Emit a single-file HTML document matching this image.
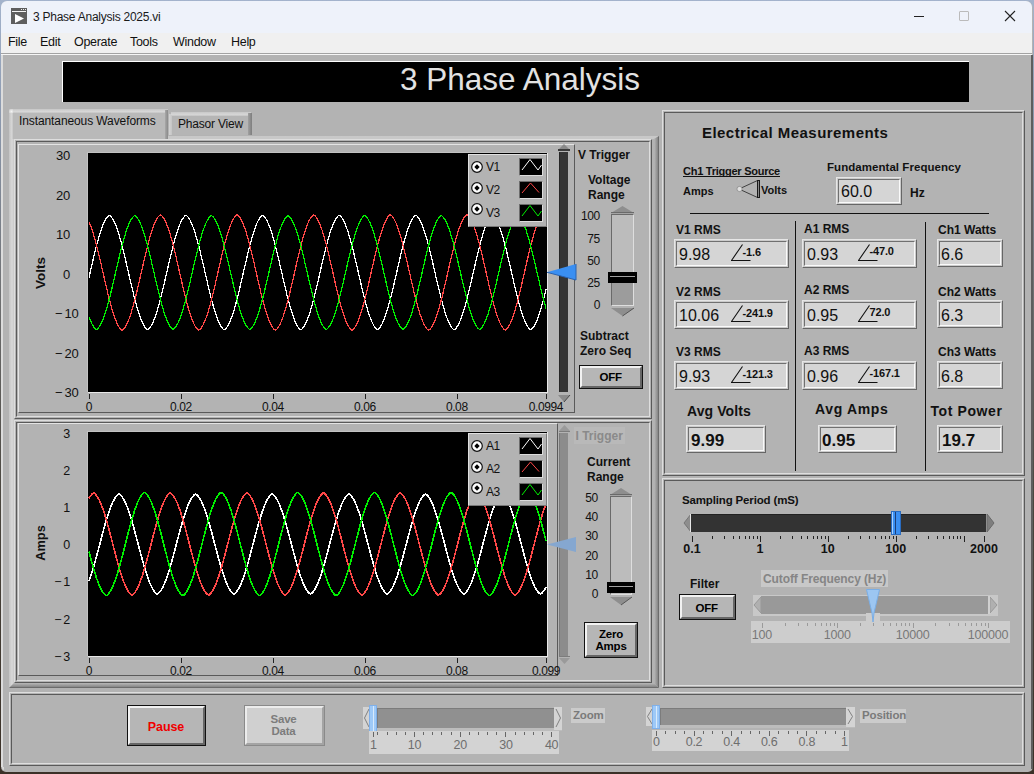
<!DOCTYPE html><html><head><meta charset="utf-8"><style>html,body{margin:0;padding:0;width:1034px;height:774px;overflow:hidden;background:#3a3226}.a{position:absolute}.t{position:absolute;white-space:nowrap;line-height:1;font-family:"Liberation Sans",sans-serif}</style></head><body><div class="a" style="left:0;top:0;width:1034px;height:774px;background:linear-gradient(to bottom,#a3b3cc 0px,#8b98ad 120px,#6e6f70 300px,#4a463e 500px,#3b3128 774px)"></div>
<div class="a" style="left:1px;top:1px;width:1032px;height:771px;border-radius:7px 7px 5px 5px;background:#b3b3b3"></div>
<div class="a" style="left:1px;top:1px;width:1031px;height:32px;background:#eef2fa;border-radius:6px 6px 0 0"></div>
<div class="a" style="left:1px;top:33px;width:1031px;height:20px;background:#f0f0f0"></div>
<div class="a" style="left:1px;top:53px;width:1031px;height:1px;background:#a3a3a3"></div>
<div class="a" style="left:1px;top:54px;width:1031px;height:1px;background:#f6f6f6"></div>
<div class="a" style="left:1px;top:55px;width:2px;height:712px;background:#dcdcdc"></div>
<div class="a" style="left:2px;top:767px;width:2px;height:3px;background:#d8d8d8;border-bottom-left-radius:3px"></div>
<div class="a" style="left:1031px;top:55px;width:2px;height:714px;background:#5e5e5e"></div>
<svg class="a" style="left:11px;top:8px" width="16" height="16" viewBox="0 0 16 16" shape-rendering="crispEdges"><rect x="0" y="0" width="16" height="16" fill="#5e5e5e"/><rect x="1" y="3" width="14" height="1" fill="#f4f4f4"/><rect x="10" y="1" width="1" height="1" fill="#eee"/><rect x="12" y="1" width="1" height="1" fill="#eee"/><rect x="14" y="1" width="1" height="1" fill="#eee"/><path d="M4 6 L13 10.5 L4 15 Z" fill="#fff" shape-rendering="auto"/></svg>
<div class="t" style="left:33px;top:11.1px;font-size:12px;font-weight:400;color:#1a1a1a;letter-spacing:-0.25px">3 Phase Analysis 2025.vi</div>
<div class="a" style="left:914px;top:16px;width:10px;height:1px;background:#222"></div>
<div class="a" style="left:959px;top:11px;width:10px;height:10px;border:1px solid #bbb;border-radius:1px;box-sizing:border-box"></div>
<svg class="a" style="left:1004px;top:10px" width="12" height="12" viewBox="0 0 12 12"><path d="M1 1 L11 11 M11 1 L1 11" stroke="#222" stroke-width="1.1"/></svg>
<div class="t" style="left:8px;top:36.4px;font-size:12.5px;font-weight:400;color:#111;letter-spacing:-0.3px">File</div>
<div class="t" style="left:40px;top:36.4px;font-size:12.5px;font-weight:400;color:#111;letter-spacing:-0.3px">Edit</div>
<div class="t" style="left:74px;top:36.4px;font-size:12.5px;font-weight:400;color:#111;letter-spacing:-0.3px">Operate</div>
<div class="t" style="left:130px;top:36.4px;font-size:12.5px;font-weight:400;color:#111;letter-spacing:-0.3px">Tools</div>
<div class="t" style="left:173px;top:36.4px;font-size:12.5px;font-weight:400;color:#111;letter-spacing:-0.3px">Window</div>
<div class="t" style="left:231px;top:36.4px;font-size:12.5px;font-weight:400;color:#111;letter-spacing:-0.3px">Help</div>
<div class="a" style="left:62px;top:61px;width:907px;height:41px;background:#000;border-top:1px solid #fff;border-left:1px solid #fff;box-sizing:border-box"></div>
<div class="t" style="left:520px;transform:translateX(-50%);top:64.3px;font-size:31.5px;font-weight:400;color:#e2e2e2;">3 Phase Analysis</div>
<div class="a" style="left:9px;top:136px;width:650px;height:552px;background:#b3b3b3"></div>
<svg class="a" style="left:9px;top:136px" width="650" height="552"><defs><linearGradient id="gl" x1="0" x2="1" y1="0" y2="0"><stop offset="0" stop-color="#c4c4c4"/><stop offset="0.6" stop-color="#d8d8d8"/><stop offset="1" stop-color="#c8c8c8"/></linearGradient><linearGradient id="gr" x1="0" x2="1" y1="0" y2="0"><stop offset="0" stop-color="#b8b8b8"/><stop offset="0.7" stop-color="#8c8c8c"/><stop offset="1" stop-color="#5c5c5c"/></linearGradient><linearGradient id="gb" x1="0" x2="0" y1="0" y2="1"><stop offset="0" stop-color="#b8b8b8"/><stop offset="0.7" stop-color="#8c8c8c"/><stop offset="1" stop-color="#5c5c5c"/></linearGradient><linearGradient id="gt" x1="0" x2="0" y1="0" y2="1"><stop offset="0" stop-color="#c8c8c8"/><stop offset="1" stop-color="#d6d6d6"/></linearGradient></defs><path d="M0 0 L650 0 L645 3 L5 3 L5 547 L0 552 Z" fill="url(#gt)"/><path d="M0 0 L5 3 L5 547 L0 552 Z" fill="url(#gl)"/><path d="M650 0 L650 552 L645 547 L645 3 Z" fill="url(#gr)"/><path d="M0 552 L650 552 L645 547 L5 547 Z" fill="url(#gb)"/></svg>
<div class="a" style="left:9px;top:109px;width:159px;height:30px;background:#b9b9b9;border-radius:3px 3px 0 0"></div>
<div class="a" style="left:9px;top:112px;width:4px;height:27px;background:linear-gradient(to right,#c2c2c2,#d6d6d6 60%,#c6c6c6)"></div>
<div class="a" style="left:12px;top:109px;width:156px;height:4px;background:linear-gradient(to bottom,#c6c6c6,#d8d8d8 60%,#c4c4c4)"></div>
<div class="a" style="left:9px;top:109px;width:4px;height:4px;background:radial-gradient(circle at 2.5px 2.5px,#f4f4f4 0,#d8d8d8 2px,rgba(179,179,179,0) 3.5px)"></div>
<div class="a" style="left:165px;top:110px;width:3px;height:29px;background:linear-gradient(to right,#a8a8a8,#8a8a8a)"></div>
<div class="a" style="left:169px;top:112px;width:83px;height:23px;background:#b5b5b5;border-radius:3px 3px 0 0"></div>
<div class="a" style="left:169px;top:114px;width:3px;height:21px;background:linear-gradient(to right,#d4d4d4,#c4c4c4)"></div>
<div class="a" style="left:171px;top:112px;width:80px;height:4px;background:linear-gradient(to bottom,#c8c8c8,#d6d6d6 60%,#c4c4c4)"></div>
<div class="a" style="left:248px;top:113px;width:4px;height:22px;background:linear-gradient(to right,#a0a0a0,#7e7e7e)"></div>
<div class="t" style="left:19px;top:114.8px;font-size:12px;font-weight:400;color:#111;letter-spacing:-0.1px">Instantaneous Waveforms</div>
<div class="t" style="left:178px;top:117.8px;font-size:12px;font-weight:400;color:#111;letter-spacing:-0.2px">Phasor View</div>
<div class="a" style="left:14px;top:139px;width:638px;height:280px;border-top:1px solid #dedede;border-left:1px solid #dedede;border-right:1px solid #5a5a5a;border-bottom:1px solid #5a5a5a;box-sizing:border-box"></div>
<div class="a" style="left:16px;top:141px;width:634px;height:276px;border-top:1px solid #5a5a5a;border-left:1px solid #5a5a5a;border-right:1px solid #dedede;border-bottom:1px solid #dedede;box-sizing:border-box"></div>
<div class="a" style="left:18px;top:144px;width:557px;height:269px;border-top:1px solid #e4e4e4;border-left:1px solid #e4e4e4;border-right:1px solid #5a5a5a;border-bottom:1px solid #5a5a5a;box-sizing:border-box"></div>
<div class="a" style="left:88px;top:153px;width:459px;height:239px;background:#000;border-right:1px solid #e8e8e8;border-bottom:1px solid #e8e8e8;box-shadow:-1px -1px 0 0 #c2c2c2"></div>
<svg class="a" style="left:0;top:0" width="1034" height="774"><defs><clipPath id="c139"><rect x="88" y="153" width="459" height="239"/></clipPath></defs><g clip-path="url(#c139)" fill="none" stroke-width="1.25" shape-rendering="crispEdges"><polyline stroke="#ffffff" points="89,277.5 90,273.1 91,268.8 92,264.4 93,260.1 94,255.9 95,251.8 96,247.8 97,243.9 98,240.2 99,236.7 100,233.4 101,230.3 102,227.5 103,224.9 104,222.6 105,220.5 106,218.8 107,217.3 108,216.2 109,215.3 110,215.7 111,216.6 112,217.9 113,219.5 114,221.3 115,223.5 116,225.9 117,228.6 118,231.6 119,234.7 120,238.1 121,241.7 122,245.5 123,249.4 124,253.4 125,257.6 126,261.9 127,266.2 128,270.5 129,274.9 130,279.2 131,283.5 132,287.8 133,291.9 134,296.0 135,299.9 136,303.6 137,307.2 138,310.6 139,313.7 140,316.6 141,319.3 142,321.7 143,323.8 144,325.7 145,327.2 146,328.5 147,329.4 148,329.6 149,328.7 150,327.5 151,326.1 152,324.3 153,322.2 154,319.9 155,317.3 156,314.4 157,311.3 158,308.0 159,304.4 160,300.7 161,296.8 162,292.8 163,288.7 164,284.5 165,280.2 166,275.8 167,271.5 168,267.1 169,262.8 170,258.5 171,254.4 172,250.3 173,246.3 174,242.5 175,238.9 176,235.5 177,232.2 178,229.2 179,226.5 180,224.0 181,221.8 182,219.9 183,218.2 184,216.9 185,215.8 186,215.2 187,216.0 188,217.1 189,218.4 190,220.1 191,222.1 192,224.4 193,226.9 194,229.7 195,232.7 196,236.0 197,239.4 198,243.1 199,246.9 200,250.9 201,255.0 202,259.2 203,263.5 204,267.8 205,272.2 206,276.5 207,280.8 208,285.1 209,289.3 210,293.5 211,297.4 212,301.3 213,305.0 214,308.5 215,311.8 216,314.8 217,317.7 218,320.2 219,322.5 220,324.6 221,326.3 222,327.7 223,328.9 224,329.7 225,329.3 226,328.3 227,327.0 228,325.4 229,323.5 230,321.4 231,318.9 232,316.2 233,313.3 234,310.1 235,306.7 236,303.1 237,299.3 238,295.4 239,291.3 240,287.1 241,282.9 242,278.6 243,274.2 244,269.9 245,265.5 246,261.2 247,257.0 248,252.8 249,248.8 250,244.9 251,241.2 252,237.6 253,234.2 254,231.1 255,228.2 256,225.5 257,223.1 258,221.0 259,219.2 260,217.7 261,216.5 262,215.5 263,215.5 264,216.3 265,217.5 266,219.0 267,220.8 268,222.9 269,225.3 270,227.9 271,230.8 272,233.9 273,237.2 274,240.8 275,244.5 276,248.4 277,252.4 278,256.6 279,260.8 280,265.1 281,269.4 282,273.8 283,278.1 284,282.4 285,286.7 286,290.9 287,295.0 288,298.9 289,302.7 290,306.3 291,309.7 292,312.9 293,315.9 294,318.7 295,321.1 296,323.3 297,325.2 298,326.9 299,328.2 300,329.2 301,329.8 302,329.0 303,327.9 304,326.5 305,324.8 306,322.8 307,320.5 308,317.9 309,315.1 310,312.1 311,308.8 312,305.3 313,301.7 314,297.8 315,293.9 316,289.8 317,285.6 318,281.3 319,276.9 320,272.6 321,268.2 322,263.9 323,259.6 324,255.4 325,251.3 326,247.3 327,243.5 328,239.8 329,236.3 330,233.0 331,230.0 332,227.2 333,224.6 334,222.3 335,220.3 336,218.6 337,217.2 338,216.1 339,215.3 340,215.8 341,216.8 342,218.1 343,219.7 344,221.6 345,223.8 346,226.2 347,229.0 348,231.9 349,235.1 350,238.5 351,242.2 352,245.9 353,249.9 354,253.9 355,258.1 356,262.4 357,266.7 358,271.0 359,275.4 360,279.7 361,284.0 362,288.3 363,292.4 364,296.5 365,300.3 366,304.1 367,307.6 368,311.0 369,314.1 370,317.0 371,319.6 372,322.0 373,324.1 374,325.9 375,327.4 376,328.6 377,329.5 378,329.5 379,328.6 380,327.4 381,325.9 382,324.0 383,321.9 384,319.6 385,316.9 386,314.0 387,310.9 388,307.5 389,304.0 390,300.3 391,296.4 392,292.3 393,288.2 394,284.0 395,279.7 396,275.3 397,271.0 398,266.6 399,262.3 400,258.0 401,253.9 402,249.8 403,245.9 404,242.1 405,238.5 406,235.1 407,231.9 408,228.9 409,226.2 410,223.7 411,221.5 412,219.6 413,218.0 414,216.7 415,215.7 416,215.3 417,216.1 418,217.2 419,218.6 420,220.4 421,222.4 422,224.7 423,227.2 424,230.0 425,233.1 426,236.4 427,239.9 428,243.6 429,247.4 430,251.4 431,255.5 432,259.7 433,264.0 434,268.3 435,272.7 436,277.0 437,281.4 438,285.6 439,289.8 440,293.9 441,297.9 442,301.8 443,305.4 444,308.9 445,312.2 446,315.2 447,318.0 448,320.5 449,322.8 450,324.8 451,326.5 452,327.9 453,329.0 454,329.8 455,329.2 456,328.2 457,326.8 458,325.2 459,323.3 460,321.1 461,318.6 462,315.9 463,312.9 464,309.7 465,306.2 466,302.6 467,298.8 468,294.9 469,290.8 470,286.6 471,282.4 472,278.0 473,273.7 474,269.3 475,265.0 476,260.7 477,256.5 478,252.3 479,248.3 480,244.4 481,240.7 482,237.2 483,233.8 484,230.7 485,227.9 486,225.2 487,222.9 488,220.8 489,219.0 490,217.5 491,216.3 492,215.4 493,215.5 494,216.5 495,217.7 496,219.2 497,221.1 498,223.2 499,225.6 500,228.2 501,231.2 502,234.3 503,237.7 504,241.2 505,245.0 506,248.9 507,252.9 508,257.1 509,261.3 510,265.6 511,269.9 512,274.3 513,278.7 514,283.0 515,287.2 516,291.4 517,295.4 518,299.4 519,303.1 520,306.7 521,310.1 522,313.3 523,316.3 524,319.0 525,321.4 526,323.6 527,325.5 528,327.0 529,328.3 530,329.3 531,329.7 532,328.8 533,327.7 534,326.3 535,324.5 536,322.5 537,320.2 538,317.6 539,314.8 540,311.7 541,308.4 542,304.9 543,301.2 544,297.4 545,293.4 546,289.3"/><polyline stroke="#ff4848" points="89,221.9 90,224.2 91,226.8 92,229.7 93,232.7 94,236.0 95,239.6 96,243.3 97,247.1 98,251.2 99,255.3 100,259.5 101,263.8 102,268.2 103,272.6 104,277.0 105,281.4 106,285.7 107,289.9 108,294.0 109,298.1 110,301.9 111,305.6 112,309.1 113,312.4 114,315.5 115,318.3 116,320.9 117,323.2 118,325.2 119,326.9 120,328.3 121,329.4 122,330.2 123,329.7 124,328.6 125,327.3 126,325.7 127,323.7 128,321.5 129,319.0 130,316.3 131,313.3 132,310.0 133,306.6 134,302.9 135,299.1 136,295.1 137,291.0 138,286.8 139,282.5 140,278.2 141,273.8 142,269.4 143,265.0 144,260.7 145,256.4 146,252.2 147,248.2 148,244.3 149,240.5 150,236.9 151,233.6 152,230.4 153,227.5 154,224.9 155,222.5 156,220.4 157,218.6 158,217.1 159,215.9 160,215.0 161,215.1 162,216.0 163,217.2 164,218.8 165,220.6 166,222.8 167,225.2 168,227.8 169,230.8 170,233.9 171,237.3 172,240.9 173,244.7 174,248.6 175,252.7 176,256.9 177,261.1 178,265.5 179,269.9 180,274.2 181,278.6 182,283.0 183,287.3 184,291.5 185,295.6 186,299.5 187,303.3 188,307.0 189,310.4 190,313.6 191,316.6 192,319.3 193,321.8 194,324.0 195,325.9 196,327.5 197,328.8 198,329.8 199,330.1 200,329.3 201,328.2 202,326.7 203,325.0 204,322.9 205,320.6 206,318.0 207,315.2 208,312.1 209,308.8 210,305.2 211,301.5 212,297.6 213,293.6 214,289.5 215,285.2 216,280.9 217,276.5 218,272.1 219,267.7 220,263.4 221,259.1 222,254.8 223,250.7 224,246.7 225,242.8 226,239.2 227,235.7 228,232.4 229,229.3 230,226.5 231,224.0 232,221.7 233,219.7 234,218.0 235,216.6 236,215.5 237,214.7 238,215.4 239,216.4 240,217.8 241,219.4 242,221.4 243,223.6 244,226.1 245,228.9 246,231.9 247,235.2 248,238.6 249,242.3 250,246.1 251,250.1 252,254.2 253,258.5 254,262.8 255,267.1 256,271.5 257,275.9 258,280.3 259,284.6 260,288.9 261,293.0 262,297.1 263,301.0 264,304.7 265,308.3 266,311.6 267,314.7 268,317.6 269,320.3 270,322.6 271,324.7 272,326.5 273,328.0 274,329.2 275,330.0 276,329.9 277,328.9 278,327.7 279,326.1 280,324.2 281,322.1 282,319.7 283,317.0 284,314.0 285,310.9 286,307.5 287,303.9 288,300.1 289,296.1 290,292.1 291,287.9 292,283.6 293,279.3 294,274.9 295,270.5 296,266.1 297,261.8 298,257.5 299,253.3 300,249.2 301,245.2 302,241.4 303,237.8 304,234.4 305,231.2 306,228.3 307,225.5 308,223.1 309,220.9 310,219.0 311,217.5 312,216.2 313,215.2 314,214.9 315,215.7 316,216.9 317,218.4 318,220.1 319,222.2 320,224.5 321,227.1 322,230.0 323,233.1 324,236.5 325,240.0 326,243.7 327,247.6 328,251.6 329,255.8 330,260.1 331,264.4 332,268.7 333,273.1 334,277.5 335,281.9 336,286.2 337,290.4 338,294.5 339,298.5 340,302.4 341,306.1 342,309.5 343,312.8 344,315.8 345,318.6 346,321.2 347,323.4 348,325.4 349,327.1 350,328.5 351,329.5 352,330.3 353,329.6 354,328.5 355,327.1 356,325.4 357,323.5 358,321.2 359,318.7 360,315.9 361,312.9 362,309.6 363,306.1 364,302.5 365,298.6 366,294.6 367,290.5 368,286.3 369,282.0 370,277.6 371,273.2 372,268.8 373,264.5 374,260.1 375,255.9 376,251.7 377,247.7 378,243.8 379,240.1 380,236.5 381,233.2 382,230.1 383,227.2 384,224.6 385,222.2 386,220.2 387,218.4 388,216.9 389,215.8 390,214.9 391,215.2 392,216.1 393,217.4 394,219.0 395,220.9 396,223.0 397,225.5 398,228.2 399,231.1 400,234.3 401,237.8 402,241.4 403,245.2 404,249.1 405,253.2 406,257.4 407,261.7 408,266.0 409,270.4 410,274.8 411,279.2 412,283.5 413,287.8 414,292.0 415,296.0 416,300.0 417,303.8 418,307.4 419,310.8 420,314.0 421,316.9 422,319.6 423,322.0 424,324.2 425,326.1 426,327.6 427,328.9 428,329.9 429,330.1 430,329.2 431,328.0 432,326.5 433,324.7 434,322.7 435,320.3 436,317.7 437,314.8 438,311.7 439,308.3 440,304.8 441,301.1 442,297.2 443,293.1 444,288.9 445,284.7 446,280.4 447,276.0 448,271.6 449,267.2 450,262.9 451,258.5 452,254.3 453,250.2 454,246.2 455,242.4 456,238.7 457,235.3 458,232.0 459,229.0 460,226.2 461,223.7 462,221.4 463,219.5 464,217.8 465,216.5 466,215.4 467,214.7 468,215.5 469,216.6 470,218.0 471,219.7 472,221.7 473,223.9 474,226.5 475,229.3 476,232.3 477,235.6 478,239.1 479,242.8 480,246.6 481,250.6 482,254.7 483,259.0 484,263.3 485,267.6 486,272.0 487,276.4 488,280.8 489,285.1 490,289.4 491,293.5 492,297.5 493,301.4 494,305.1 495,308.7 496,312.0 497,315.1 498,318.0 499,320.6 500,322.9 501,324.9 502,326.7 503,328.1 504,329.3 505,330.1 506,329.8 507,328.8 508,327.5 509,325.9 510,324.0 511,321.8 512,319.4 513,316.6 514,313.7 515,310.5 516,307.0 517,303.4 518,299.6 519,295.7 520,291.6 521,287.4 522,283.1 523,278.7 524,274.3 525,270.0 526,265.6 527,261.2 528,257.0 529,252.8 530,248.7 531,244.8 532,241.0 533,237.4 534,234.0 535,230.8 536,227.9 537,225.2 538,222.8 539,220.7 540,218.8 541,217.3 542,216.0 543,215.1 544,215.0 545,215.9 546,217.1"/><polyline stroke="#00f000" points="89,316.8 90,319.4 91,321.8 92,323.9 93,325.7 94,327.2 95,328.4 96,329.2 97,329.2 98,328.3 99,327.1 100,325.5 101,323.7 102,321.6 103,319.3 104,316.6 105,313.7 106,310.6 107,307.3 108,303.7 109,300.0 110,296.1 111,292.1 112,288.0 113,283.8 114,279.5 115,275.2 116,270.8 117,266.5 118,262.2 119,258.0 120,253.8 121,249.8 122,245.9 123,242.1 124,238.5 125,235.2 126,232.0 127,229.0 128,226.3 129,223.9 130,221.7 131,219.9 132,218.3 133,217.0 134,216.0 135,215.6 136,216.4 137,217.5 138,219.0 139,220.7 140,222.7 141,225.0 142,227.5 143,230.3 144,233.4 145,236.7 146,240.1 147,243.8 148,247.6 149,251.6 150,255.7 151,259.9 152,264.1 153,268.5 154,272.8 155,277.1 156,281.4 157,285.7 158,289.9 159,293.9 160,297.9 161,301.7 162,305.3 163,308.8 164,312.0 165,315.1 166,317.8 167,320.4 168,322.6 169,324.6 170,326.3 171,327.6 172,328.7 173,329.5 174,328.9 175,327.9 176,326.5 177,324.9 178,323.0 179,320.8 180,318.3 181,315.6 182,312.6 183,309.4 184,306.0 185,302.4 186,298.6 187,294.7 188,290.6 189,286.4 190,282.2 191,277.9 192,273.6 193,269.2 194,264.9 195,260.6 196,256.4 197,252.3 198,248.3 199,244.5 200,240.8 201,237.3 202,233.9 203,230.9 204,228.0 205,225.4 206,223.1 207,221.0 208,219.2 209,217.8 210,216.6 211,215.7 212,215.9 213,216.8 214,218.0 215,219.6 216,221.4 217,223.5 218,225.9 219,228.5 220,231.4 221,234.6 222,237.9 223,241.5 224,245.2 225,249.1 226,253.1 227,257.2 228,261.5 229,265.8 230,270.1 231,274.4 232,278.7 233,283.0 234,287.3 235,291.4 236,295.4 237,299.3 238,303.1 239,306.7 240,310.0 241,313.2 242,316.1 243,318.8 244,321.2 245,323.4 246,325.2 247,326.8 248,328.1 249,329.1 250,329.4 251,328.5 252,327.4 253,326.0 254,324.2 255,322.2 256,319.9 257,317.3 258,314.5 259,311.4 260,308.1 261,304.6 262,301.0 263,297.1 264,293.2 265,289.1 266,284.9 267,280.6 268,276.3 269,271.9 270,267.6 271,263.3 272,259.1 273,254.9 274,250.8 275,246.9 276,243.1 277,239.4 278,236.0 279,232.8 280,229.8 281,227.0 282,224.5 283,222.3 284,220.3 285,218.6 286,217.3 287,216.2 288,215.5 289,216.2 290,217.2 291,218.6 292,220.2 293,222.1 294,224.4 295,226.9 296,229.6 297,232.6 298,235.8 299,239.2 300,242.9 301,246.6 302,250.6 303,254.6 304,258.8 305,263.1 306,267.4 307,271.7 308,276.0 309,280.3 310,284.6 311,288.8 312,292.9 313,296.9 314,300.8 315,304.4 316,307.9 317,311.2 318,314.3 319,317.2 320,319.7 321,322.1 322,324.1 323,325.9 324,327.3 325,328.5 326,329.3 327,329.1 328,328.1 329,326.9 330,325.3 331,323.5 332,321.4 333,319.0 334,316.3 335,313.4 336,310.2 337,306.9 338,303.3 339,299.6 340,295.7 341,291.6 342,287.5 343,283.3 344,279.0 345,274.7 346,270.3 347,266.0 348,261.7 349,257.5 350,253.3 351,249.3 352,245.4 353,241.7 354,238.1 355,234.8 356,231.6 357,228.7 358,226.0 359,223.6 360,221.5 361,219.7 362,218.1 363,216.8 364,215.9 365,215.7 366,216.5 367,217.7 368,219.1 369,220.9 370,222.9 371,225.3 372,227.9 373,230.7 374,233.8 375,237.1 376,240.6 377,244.3 378,248.1 379,252.1 380,256.2 381,260.4 382,264.7 383,269.0 384,273.3 385,277.6 386,282.0 387,286.2 388,290.4 389,294.4 390,298.4 391,302.2 392,305.8 393,309.2 394,312.4 395,315.4 396,318.2 397,320.6 398,322.9 399,324.8 400,326.4 401,327.8 402,328.8 403,329.5 404,328.8 405,327.7 406,326.3 407,324.7 408,322.7 409,320.5 410,318.0 411,315.2 412,312.2 413,309.0 414,305.5 415,301.9 416,298.1 417,294.2 418,290.1 419,285.9 420,281.7 421,277.4 422,273.0 423,268.7 424,264.4 425,260.1 426,255.9 427,251.8 428,247.9 429,244.0 430,240.3 431,236.8 432,233.6 433,230.5 434,227.7 435,225.1 436,222.8 437,220.8 438,219.0 439,217.6 440,216.5 441,215.6 442,216.0 443,216.9 444,218.2 445,219.8 446,221.6 447,223.8 448,226.2 449,228.9 450,231.8 451,235.0 452,238.4 453,241.9 454,245.7 455,249.6 456,253.6 457,257.8 458,262.0 459,266.3 460,270.6 461,274.9 462,279.3 463,283.5 464,287.8 465,291.9 466,295.9 467,299.8 468,303.5 469,307.1 470,310.4 471,313.6 472,316.5 473,319.1 474,321.5 475,323.6 476,325.4 477,327.0 478,328.2 479,329.1 480,329.3 481,328.4 482,327.2 483,325.8 484,324.0 485,321.9 486,319.6 487,317.0 488,314.1 489,311.0 490,307.7 491,304.2 492,300.5 493,296.7 494,292.7 495,288.6 496,284.3 497,280.1 498,275.8 499,271.4 500,267.1 501,262.8 502,258.5 503,254.4 504,250.3 505,246.4 506,242.6 507,239.0 508,235.6 509,232.4 510,229.4 511,226.7 512,224.2 513,222.0 514,220.1 515,218.5 516,217.1 517,216.1 518,215.5 519,216.3 520,217.4 521,218.7 522,220.4 523,222.4 524,224.7 525,227.2 526,229.9 527,233.0 528,236.2 529,239.7 530,243.3 531,247.1 532,251.1 533,255.1 534,259.3 535,263.6 536,267.9 537,272.2 538,276.6 539,280.9 540,285.1 541,289.3 542,293.4 543,297.4 544,301.2 545,304.9 546,308.4"/></g></svg>
<div class="t" style="right:964px;top:149.3px;font-size:13px;font-weight:400;color:#111;letter-spacing:-0.2px">30</div>
<div class="t" style="right:964px;top:188.7px;font-size:13px;font-weight:400;color:#111;letter-spacing:-0.2px">20</div>
<div class="t" style="right:964px;top:228.2px;font-size:13px;font-weight:400;color:#111;letter-spacing:-0.2px">10</div>
<div class="t" style="right:964px;top:267.6px;font-size:13px;font-weight:400;color:#111;letter-spacing:-0.2px">0</div>
<div class="t" style="right:955.5px;top:307.1px;font-size:13px;font-weight:400;color:#111;letter-spacing:-0.2px"><span style="margin-right:2px">−</span>10</div>
<div class="t" style="right:955.5px;top:346.5px;font-size:13px;font-weight:400;color:#111;letter-spacing:-0.2px"><span style="margin-right:2px">−</span>20</div>
<div class="t" style="right:955.5px;top:386.0px;font-size:13px;font-weight:400;color:#111;letter-spacing:-0.2px"><span style="margin-right:2px">−</span>30</div>
<div class="t" style="left:40.5px;top:273.0px;font-size:13.5px;font-weight:700;color:#111;transform:translate(-50%,-50%) rotate(-90deg)">Volts</div>
<div class="a" style="left:89px;top:394px;width:1px;height:5px;background:#222"></div>
<div class="t" style="left:89px;transform:translateX(-50%);top:400.8px;font-size:12px;font-weight:400;color:#111;letter-spacing:-0.4px">0</div>
<div class="a" style="left:181px;top:394px;width:1px;height:5px;background:#222"></div>
<div class="t" style="left:180.95171026156942px;transform:translateX(-50%);top:400.8px;font-size:12px;font-weight:400;color:#111;letter-spacing:-0.4px">0.02</div>
<div class="a" style="left:273px;top:394px;width:1px;height:5px;background:#222"></div>
<div class="t" style="left:272.90342052313883px;transform:translateX(-50%);top:400.8px;font-size:12px;font-weight:400;color:#111;letter-spacing:-0.4px">0.04</div>
<div class="a" style="left:365px;top:394px;width:1px;height:5px;background:#222"></div>
<div class="t" style="left:364.85513078470825px;transform:translateX(-50%);top:400.8px;font-size:12px;font-weight:400;color:#111;letter-spacing:-0.4px">0.06</div>
<div class="a" style="left:457px;top:394px;width:1px;height:5px;background:#222"></div>
<div class="t" style="left:456.80684104627767px;transform:translateX(-50%);top:400.8px;font-size:12px;font-weight:400;color:#111;letter-spacing:-0.4px">0.08</div>
<div class="a" style="left:546px;top:394px;width:1px;height:5px;background:#222"></div>
<div class="t" style="left:546px;transform:translateX(-50%);top:400.8px;font-size:12px;font-weight:400;color:#111;letter-spacing:-0.4px">0.0994</div>
<div class="a" style="left:468px;top:154px;width:79px;height:73px;background:#b3b3b3;border-top:1px solid #e0e0e0;border-left:1px solid #e0e0e0;border-right:1px solid #777;border-bottom:1px solid #777;box-sizing:border-box"></div>
<svg class="a" style="left:470px;top:159.5px" width="14" height="14"><circle cx="7" cy="7" r="5.3" fill="#fff" stroke="#111" stroke-width="1.2"/><path d="M7 4.3 L9.7 7 L7 9.7 L4.3 7 Z" fill="#000"/></svg>
<div class="t" style="left:486px;top:160.8px;font-size:12px;font-weight:400;color:#111;letter-spacing:-0.6px">V1</div>
<div class="a" style="left:519px;top:158px;width:24px;height:18px;background:#000;border-top:1px solid #6c6c6c;border-left:1px solid #6c6c6c;border-right:1px solid #dcdcdc;border-bottom:1px solid #dcdcdc;box-sizing:border-box"></div>
<svg class="a" style="left:519px;top:158px" width="24" height="18"><polyline points="3,12 11,1.5 19,12 22.5,7" fill="none" stroke="#ffffff" stroke-width="1"/></svg>
<svg class="a" style="left:470px;top:180.5px" width="14" height="14"><circle cx="7" cy="7" r="5.3" fill="#fff" stroke="#111" stroke-width="1.2"/><path d="M7 4.3 L9.7 7 L7 9.7 L4.3 7 Z" fill="#000"/></svg>
<div class="t" style="left:486px;top:183.8px;font-size:12px;font-weight:400;color:#111;letter-spacing:-0.6px">V2</div>
<div class="a" style="left:519px;top:181px;width:24px;height:18px;background:#000;border-top:1px solid #6c6c6c;border-left:1px solid #6c6c6c;border-right:1px solid #dcdcdc;border-bottom:1px solid #dcdcdc;box-sizing:border-box"></div>
<svg class="a" style="left:519px;top:181px" width="24" height="18"><polyline points="3,12 11.5,2 20,11.5" fill="none" stroke="#ff4848" stroke-width="1"/></svg>
<svg class="a" style="left:470px;top:201.5px" width="14" height="14"><circle cx="7" cy="7" r="5.3" fill="#fff" stroke="#111" stroke-width="1.2"/><path d="M7 4.3 L9.7 7 L7 9.7 L4.3 7 Z" fill="#000"/></svg>
<div class="t" style="left:486px;top:206.8px;font-size:12px;font-weight:400;color:#111;letter-spacing:-0.6px">V3</div>
<div class="a" style="left:519px;top:204px;width:24px;height:18px;background:#000;border-top:1px solid #6c6c6c;border-left:1px solid #6c6c6c;border-right:1px solid #dcdcdc;border-bottom:1px solid #dcdcdc;box-sizing:border-box"></div>
<svg class="a" style="left:519px;top:204px" width="24" height="18"><polyline points="3,12 11,1.5 19,12 22.5,7" fill="none" stroke="#00f000" stroke-width="1"/></svg>
<div class="a" style="left:14px;top:420px;width:638px;height:263px;border-top:1px solid #dedede;border-left:1px solid #dedede;border-right:1px solid #5a5a5a;border-bottom:1px solid #5a5a5a;box-sizing:border-box"></div>
<div class="a" style="left:16px;top:422px;width:634px;height:259px;border-top:1px solid #5a5a5a;border-left:1px solid #5a5a5a;border-right:1px solid #dedede;border-bottom:1px solid #dedede;box-sizing:border-box"></div>
<div class="a" style="left:18px;top:423px;width:540px;height:253px;border-top:1px solid #e4e4e4;border-left:1px solid #e4e4e4;border-right:1px solid #5a5a5a;border-bottom:1px solid #5a5a5a;box-sizing:border-box"></div>
<div class="a" style="left:88px;top:432px;width:459px;height:224px;background:#000;border-right:1px solid #e8e8e8;border-bottom:1px solid #e8e8e8;box-shadow:-1px -1px 0 0 #c2c2c2"></div>
<svg class="a" style="left:0;top:0" width="1034" height="774"><defs><clipPath id="c420"><rect x="88" y="432" width="459" height="224"/></clipPath></defs><g clip-path="url(#c420)" fill="none" stroke-width="1.6" shape-rendering="crispEdges"><polyline stroke="#ffffff" points="89,580.7 90,578.0 91,575.1 92,572.0 93,568.8 94,565.4 95,561.9 96,558.3 97,554.6 98,550.8 99,547.1 100,543.3 101,539.5 102,535.7 103,531.9 104,528.3 105,524.7 106,521.3 107,517.9 108,514.8 109,511.8 110,508.9 111,506.3 112,503.9 113,501.7 114,499.8 115,498.1 116,496.6 117,495.5 118,494.5 119,493.9 120,494.6 121,495.5 122,496.7 123,498.2 124,499.9 125,501.9 126,504.1 127,506.5 128,509.2 129,512.0 130,515.0 131,518.2 132,521.5 133,525.0 134,528.6 135,532.2 136,536.0 137,539.8 138,543.6 139,547.4 140,551.1 141,554.9 142,558.6 143,562.2 144,565.7 145,569.0 146,572.3 147,575.3 148,578.2 149,580.9 150,583.4 151,585.6 152,587.6 153,589.4 154,590.9 155,592.2 156,593.2 157,593.9 158,593.6 159,592.8 160,591.7 161,590.3 162,588.6 163,586.8 164,584.6 165,582.3 166,579.7 167,576.9 168,574.0 169,570.8 170,567.5 171,564.1 172,560.6 173,556.9 174,553.2 175,549.4 176,545.6 177,541.8 178,538.0 179,534.3 180,530.6 181,526.9 182,523.4 183,520.0 184,516.7 185,513.6 186,510.7 187,507.9 188,505.4 189,503.1 190,501.0 191,499.1 192,497.5 193,496.2 194,495.1 195,494.3 196,494.2 197,494.9 198,496.0 199,497.3 200,498.8 201,500.6 202,502.7 203,505.0 204,507.5 205,510.2 206,513.1 207,516.2 208,519.4 209,522.8 210,526.3 211,529.9 212,533.6 213,537.4 214,541.2 215,545.0 216,548.8 217,552.6 218,556.3 219,559.9 220,563.5 221,566.9 222,570.3 223,573.4 224,576.4 225,579.2 226,581.8 227,584.2 228,586.4 229,588.3 230,590.0 231,591.4 232,592.6 233,593.5 234,594.0 235,593.3 236,592.4 237,591.2 238,589.7 239,588.0 240,586.0 241,583.8 242,581.3 243,578.7 244,575.8 245,572.8 246,569.6 247,566.3 248,562.8 249,559.2 250,555.5 251,551.8 252,548.0 253,544.2 254,540.4 255,536.6 256,532.9 257,529.2 258,525.6 259,522.1 260,518.8 261,515.6 262,512.5 263,509.6 264,507.0 265,504.5 266,502.3 267,500.2 268,498.5 269,497.0 270,495.7 271,494.7 272,494.0 273,494.4 274,495.3 275,496.4 276,497.8 277,499.5 278,501.4 279,503.5 280,505.9 281,508.5 282,511.3 283,514.2 284,517.4 285,520.7 286,524.1 287,527.7 288,531.3 289,535.0 290,538.8 291,542.6 292,546.4 293,550.2 294,553.9 295,557.6 296,561.3 297,564.8 298,568.2 299,571.5 300,574.6 301,577.5 302,580.2 303,582.8 304,585.1 305,587.1 306,589.0 307,590.6 308,591.9 309,593.0 310,593.8 311,593.8 312,593.0 313,592.0 314,590.7 315,589.1 316,587.3 317,585.2 318,582.9 319,580.4 320,577.6 321,574.7 322,571.6 323,568.4 324,565.0 325,561.5 326,557.8 327,554.1 328,550.4 329,546.6 330,542.8 331,539.0 332,535.2 333,531.5 334,527.9 335,524.3 336,520.9 337,517.6 338,514.4 339,511.4 340,508.6 341,506.0 342,503.6 343,501.5 344,499.6 345,497.9 346,496.5 347,495.3 348,494.5 349,494.0 350,494.7 351,495.7 352,496.9 353,498.4 354,500.1 355,502.1 356,504.4 357,506.8 358,509.5 359,512.3 360,515.4 361,518.6 362,521.9 363,525.4 364,529.0 365,532.7 366,536.4 367,540.2 368,544.0 369,547.8 370,551.6 371,555.3 372,559.0 373,562.6 374,566.1 375,569.4 376,572.6 377,575.7 378,578.5 379,581.2 380,583.6 381,585.9 382,587.9 383,589.6 384,591.1 385,592.3 386,593.3 387,594.0 388,593.5 389,592.7 390,591.5 391,590.1 392,588.4 393,586.5 394,584.4 395,582.0 396,579.4 397,576.6 398,573.6 399,570.4 400,567.1 401,563.7 402,560.1 403,556.5 404,552.8 405,549.0 406,545.2 407,541.4 408,537.6 409,533.8 410,530.1 411,526.5 412,523.0 413,519.6 414,516.4 415,513.3 416,510.3 417,507.6 418,505.1 419,502.8 420,500.7 421,498.9 422,497.3 423,496.0 424,495.0 425,494.2 426,494.2 427,495.0 428,496.1 429,497.4 430,499.0 431,500.9 432,502.9 433,505.3 434,507.8 435,510.5 436,513.5 437,516.6 438,519.8 439,523.2 440,526.8 441,530.4 442,534.1 443,537.8 444,541.6 445,545.4 446,549.2 447,553.0 448,556.7 449,560.4 450,563.9 451,567.3 452,570.6 453,573.8 454,576.8 455,579.6 456,582.1 457,584.5 458,586.6 459,588.5 460,590.2 461,591.6 462,592.7 463,593.6 464,594.0 465,593.2 466,592.3 467,591.0 468,589.5 469,587.7 470,585.7 471,583.5 472,581.0 473,578.3 474,575.5 475,572.4 476,569.2 477,565.8 478,562.4 479,558.8 480,555.1 481,551.3 482,547.6 483,543.8 484,540.0 485,536.2 486,532.4 487,528.8 488,525.2 489,521.7 490,518.4 491,515.2 492,512.1 493,509.3 494,506.7 495,504.2 496,502.0 497,500.0 498,498.3 499,496.8 500,495.6 501,494.6 502,494.0 503,494.5 504,495.4 505,496.6 506,498.0 507,499.7 508,501.6 509,503.8 510,506.2 511,508.8 512,511.6 513,514.6 514,517.8 515,521.1 516,524.5 517,528.1 518,531.8 519,535.5 520,539.2 521,543.1 522,546.9 523,550.6 524,554.4 525,558.1 526,561.7 527,565.2 528,568.6 529,571.8 530,574.9 531,577.8 532,580.5 533,583.0 534,585.3 535,587.4 536,589.2 537,590.7 538,592.0 539,593.1 540,593.8 541,593.7 542,592.9 543,591.8 544,590.5 545,588.9 546,587.0"/><polyline stroke="#ff4848" points="89,498.2 90,496.6 91,495.2 92,494.1 93,493.2 94,493.1 95,493.8 96,494.9 97,496.2 98,497.8 99,499.6 100,501.7 101,504.0 102,506.6 103,509.3 104,512.3 105,515.4 106,518.8 107,522.2 108,525.8 109,529.5 110,533.2 111,537.1 112,540.9 113,544.8 114,548.7 115,552.6 116,556.4 117,560.1 118,563.7 119,567.3 120,570.7 121,573.9 122,577.0 123,579.9 124,582.5 125,585.0 126,587.2 127,589.2 128,590.9 129,592.4 130,593.6 131,594.5 132,595.1 133,594.4 134,593.5 135,592.3 136,590.8 137,589.0 138,587.0 139,584.7 140,582.2 141,579.5 142,576.6 143,573.6 144,570.3 145,566.9 146,563.3 147,559.7 148,556.0 149,552.1 150,548.3 151,544.4 152,540.5 153,536.6 154,532.8 155,529.1 156,525.4 157,521.8 158,518.4 159,515.1 160,512.0 161,509.0 162,506.3 163,503.8 164,501.5 165,499.4 166,497.6 167,496.0 168,494.7 169,493.7 170,493.0 171,493.3 172,494.2 173,495.3 174,496.8 175,498.4 176,500.4 177,502.5 178,504.9 179,507.6 180,510.4 181,513.5 182,516.7 183,520.0 184,523.5 185,527.1 186,530.9 187,534.7 188,538.5 189,542.4 190,546.3 191,550.2 192,554.0 193,557.8 194,561.5 195,565.1 196,568.6 197,571.9 198,575.1 199,578.1 200,580.9 201,583.5 202,585.9 203,588.0 204,589.9 205,591.5 206,592.9 207,594.0 208,594.8 209,594.9 210,594.1 211,593.1 212,591.7 213,590.1 214,588.3 215,586.2 216,583.8 217,581.3 218,578.5 219,575.5 220,572.4 221,569.0 222,565.6 223,562.0 224,558.3 225,554.5 226,550.7 227,546.8 228,542.9 229,539.1 230,535.2 231,531.4 232,527.7 233,524.0 234,520.5 235,517.1 236,513.9 237,510.8 238,508.0 239,505.3 240,502.9 241,500.7 242,498.7 243,497.0 244,495.5 245,494.3 246,493.4 247,492.9 248,493.6 249,494.6 250,495.8 251,497.3 252,499.1 253,501.1 254,503.4 255,505.9 256,508.6 257,511.5 258,514.6 259,517.9 260,521.3 261,524.9 262,528.5 263,532.3 264,536.1 265,540.0 266,543.8 267,547.7 268,551.6 269,555.4 270,559.2 271,562.8 272,566.4 273,569.8 274,573.1 275,576.2 276,579.1 277,581.9 278,584.4 279,586.7 280,588.7 281,590.5 282,592.1 283,593.3 284,594.3 285,595.0 286,594.6 287,593.8 288,592.6 289,591.2 290,589.5 291,587.5 292,585.3 293,582.9 294,580.3 295,577.4 296,574.4 297,571.1 298,567.8 299,564.3 300,560.6 301,556.9 302,553.1 303,549.3 304,545.4 305,541.5 306,537.6 307,533.8 308,530.0 309,526.3 310,522.7 311,519.2 312,515.9 313,512.7 314,509.7 315,507.0 316,504.4 317,502.0 318,499.9 319,498.0 320,496.4 321,495.0 322,494.0 323,493.1 324,493.1 325,493.9 326,495.0 327,496.4 328,498.0 329,499.8 330,502.0 331,504.3 332,506.9 333,509.7 334,512.7 335,515.8 336,519.2 337,522.6 338,526.2 339,529.9 340,533.7 341,537.5 342,541.4 343,545.3 344,549.2 345,553.0 346,556.8 347,560.6 348,564.2 349,567.7 350,571.1 351,574.3 352,577.3 353,580.2 354,582.8 355,585.3 356,587.5 357,589.4 358,591.1 359,592.6 360,593.7 361,594.6 362,595.1 363,594.3 364,593.3 365,592.1 366,590.6 367,588.8 368,586.7 369,584.4 370,581.9 371,579.2 372,576.3 373,573.2 374,569.9 375,566.5 376,562.9 377,559.2 378,555.5 379,551.7 380,547.8 381,543.9 382,540.0 383,536.2 384,532.4 385,528.6 386,524.9 387,521.4 388,518.0 389,514.7 390,511.6 391,508.7 392,506.0 393,503.5 394,501.2 395,499.2 396,497.4 397,495.9 398,494.6 399,493.6 400,492.9 401,493.4 402,494.3 403,495.5 404,496.9 405,498.6 406,500.6 407,502.8 408,505.3 409,507.9 410,510.8 411,513.8 412,517.1 413,520.4 414,524.0 415,527.6 416,531.3 417,535.1 418,539.0 419,542.9 420,546.7 421,550.6 422,554.5 423,558.2 424,561.9 425,565.5 426,569.0 427,572.3 428,575.4 429,578.4 430,581.2 431,583.8 432,586.1 433,588.2 434,590.1 435,591.7 436,593.0 437,594.1 438,594.9 439,594.8 440,594.0 441,592.9 442,591.5 443,589.9 444,588.0 445,585.9 446,583.5 447,580.9 448,578.1 449,575.1 450,572.0 451,568.6 452,565.2 453,561.6 454,557.9 455,554.1 456,550.2 457,546.4 458,542.5 459,538.6 460,534.7 461,530.9 462,527.2 463,523.6 464,520.1 465,516.7 466,513.5 467,510.5 468,507.6 469,505.0 470,502.6 471,500.4 472,498.5 473,496.8 474,495.4 475,494.2 476,493.3 477,493.0 478,493.7 479,494.7 480,496.0 481,497.5 482,499.4 483,501.4 484,503.7 485,506.2 486,509.0 487,511.9 488,515.0 489,518.3 490,521.7 491,525.3 492,529.0 493,532.7 494,536.6 495,540.4 496,544.3 497,548.2 498,552.1 499,555.9 500,559.6 501,563.3 502,566.8 503,570.2 504,573.5 505,576.6 506,579.5 507,582.2 508,584.7 509,586.9 510,589.0 511,590.7 512,592.2 513,593.5 514,594.4 515,595.1 516,594.5 517,593.6 518,592.4 519,591.0 520,589.2 521,587.3 522,585.0 523,582.6 524,579.9 525,577.0 526,574.0 527,570.7 528,567.3 529,563.8 530,560.2 531,556.5 532,552.6 533,548.8 534,544.9 535,541.0 536,537.1 537,533.3 538,529.5 539,525.9 540,522.3 541,518.8 542,515.5 543,512.4 544,509.4 545,506.6 546,504.1"/><polyline stroke="#00f000" points="89,551.6 90,555.5 91,559.3 92,563.0 93,566.6 94,570.1 95,573.4 96,576.5 97,579.5 98,582.2 99,584.8 100,587.1 101,589.2 102,591.0 103,592.5 104,593.8 105,594.8 106,595.6 107,595.2 108,594.3 109,593.1 110,591.7 111,590.0 112,588.0 113,585.8 114,583.3 115,580.7 116,577.8 117,574.7 118,571.5 119,568.1 120,564.5 121,560.9 122,557.1 123,553.3 124,549.4 125,545.4 126,541.5 127,537.6 128,533.7 129,529.9 130,526.2 131,522.5 132,519.0 133,515.7 134,512.4 135,509.4 136,506.6 137,504.0 138,501.6 139,499.5 140,497.6 141,495.9 142,494.5 143,493.4 144,492.6 145,492.6 146,493.4 147,494.5 148,495.8 149,497.5 150,499.4 151,501.5 152,503.9 153,506.5 154,509.3 155,512.3 156,515.5 157,518.9 158,522.4 159,526.0 160,529.7 161,533.5 162,537.4 163,541.3 164,545.3 165,549.2 166,553.1 167,556.9 168,560.7 169,564.3 170,567.9 171,571.3 172,574.6 173,577.6 174,580.5 175,583.2 176,585.7 177,587.9 178,589.9 179,591.6 180,593.1 181,594.2 182,595.1 183,595.6 184,594.9 185,593.9 186,592.6 187,591.1 188,589.3 189,587.2 190,584.9 191,582.4 192,579.6 193,576.7 194,573.5 195,570.2 196,566.8 197,563.2 198,559.5 199,555.7 200,551.8 201,547.9 202,544.0 203,540.0 204,536.1 205,532.3 206,528.5 207,524.8 208,521.2 209,517.7 210,514.4 211,511.3 212,508.3 213,505.6 214,503.1 215,500.8 216,498.7 217,496.9 218,495.4 219,494.1 220,493.1 221,492.4 222,492.9 223,493.8 224,495.0 225,496.4 226,498.1 227,500.1 228,502.4 229,504.8 230,507.5 231,510.4 232,513.5 233,516.7 234,520.1 235,523.7 236,527.4 237,531.1 238,535.0 239,538.9 240,542.8 241,546.7 242,550.6 243,554.5 244,558.3 245,562.1 246,565.7 247,569.2 248,572.5 249,575.7 250,578.8 251,581.6 252,584.2 253,586.5 254,588.7 255,590.5 256,592.2 257,593.5 258,594.6 259,595.4 260,595.4 261,594.5 262,593.4 263,592.1 264,590.4 265,588.5 266,586.4 267,584.0 268,581.4 269,578.5 270,575.5 271,572.3 272,568.9 273,565.4 274,561.8 275,558.1 276,554.2 277,550.4 278,546.4 279,542.5 280,538.6 281,534.7 282,530.9 283,527.1 284,523.4 285,519.9 286,516.5 287,513.2 288,510.2 289,507.3 290,504.6 291,502.2 292,500.0 293,498.0 294,496.3 295,494.9 296,493.7 297,492.8 298,492.4 299,493.2 300,494.2 301,495.5 302,497.0 303,498.9 304,500.9 305,503.2 306,505.8 307,508.6 308,511.5 309,514.7 310,518.0 311,521.5 312,525.1 313,528.8 314,532.6 315,536.4 316,540.3 317,544.3 318,548.2 319,552.1 320,555.9 321,559.7 322,563.4 323,567.0 324,570.5 325,573.8 326,576.9 327,579.8 328,582.6 329,585.1 330,587.4 331,589.4 332,591.2 333,592.7 334,594.0 335,594.9 336,595.6 337,595.1 338,594.2 339,593.0 340,591.5 341,589.7 342,587.7 343,585.5 344,583.0 345,580.3 346,577.4 347,574.3 348,571.1 349,567.6 350,564.1 351,560.4 352,556.6 353,552.8 354,548.9 355,545.0 356,541.0 357,537.1 358,533.3 359,529.4 360,525.7 361,522.1 362,518.6 363,515.3 364,512.1 365,509.1 366,506.3 367,503.7 368,501.3 369,499.2 370,497.3 371,495.7 372,494.4 373,493.3 374,492.5 375,492.7 376,493.5 377,494.6 378,496.0 379,497.7 380,499.6 381,501.8 382,504.2 383,506.8 384,509.6 385,512.7 386,515.9 387,519.3 388,522.8 389,526.4 390,530.2 391,534.0 392,537.9 393,541.8 394,545.7 395,549.6 396,553.5 397,557.4 398,561.1 399,564.8 400,568.3 401,571.7 402,574.9 403,578.0 404,580.9 405,583.5 406,586.0 407,588.2 408,590.1 409,591.8 410,593.2 411,594.4 412,595.2 413,595.5 414,594.8 415,593.7 416,592.4 417,590.9 418,589.0 419,586.9 420,584.6 421,582.0 422,579.3 423,576.3 424,573.1 425,569.8 426,566.3 427,562.7 428,559.0 429,555.2 430,551.3 431,547.4 432,543.5 433,539.6 434,535.7 435,531.8 436,528.0 437,524.4 438,520.8 439,517.3 440,514.0 441,510.9 442,508.0 443,505.3 444,502.8 445,500.5 446,498.5 447,496.7 448,495.2 449,494.0 450,493.0 451,492.3 452,493.0 453,493.9 454,495.1 455,496.6 456,498.4 457,500.4 458,502.6 459,505.1 460,507.8 461,510.8 462,513.9 463,517.1 464,520.6 465,524.1 466,527.8 467,531.6 468,535.4 469,539.3 470,543.3 471,547.2 472,551.1 473,555.0 474,558.8 475,562.5 476,566.1 477,569.6 478,572.9 479,576.1 480,579.1 481,581.9 482,584.5 483,586.8 484,588.9 485,590.8 486,592.4 487,593.7 488,594.7 489,595.5 490,595.3 491,594.4 492,593.3 493,591.9 494,590.2 495,588.3 496,586.1 497,583.7 498,581.0 499,578.2 500,575.1 501,571.9 502,568.5 503,565.0 504,561.3 505,557.6 506,553.8 507,549.9 508,546.0 509,542.0 510,538.1 511,534.2 512,530.4 513,526.7 514,523.0 515,519.5 516,516.1 517,512.9 518,509.8 519,507.0 520,504.3 521,501.9 522,499.7 523,497.8 524,496.1 525,494.7 526,493.6 527,492.7 528,492.5 529,493.3 530,494.3 531,495.7 532,497.2 533,499.1 534,501.2 535,503.5 536,506.1 537,508.9 538,511.9 539,515.1 540,518.4 541,521.9 542,525.5 543,529.2 544,533.0 545,536.9 546,540.8"/></g></svg>
<div class="t" style="right:964px;top:428.2px;font-size:12.5px;font-weight:400;color:#111;letter-spacing:-0.2px">3</div>
<div class="t" style="right:964px;top:465.3px;font-size:12.5px;font-weight:400;color:#111;letter-spacing:-0.2px">2</div>
<div class="t" style="right:964px;top:502.3px;font-size:12.5px;font-weight:400;color:#111;letter-spacing:-0.2px">1</div>
<div class="t" style="right:964px;top:539.4px;font-size:12.5px;font-weight:400;color:#111;letter-spacing:-0.2px">0</div>
<div class="t" style="right:964px;top:576.4px;font-size:12.5px;font-weight:400;color:#111;letter-spacing:-0.2px"><span style="margin-right:2px">−</span>1</div>
<div class="t" style="right:964px;top:613.5px;font-size:12.5px;font-weight:400;color:#111;letter-spacing:-0.2px"><span style="margin-right:2px">−</span>2</div>
<div class="t" style="right:964px;top:650.5px;font-size:12.5px;font-weight:400;color:#111;letter-spacing:-0.2px"><span style="margin-right:2px">−</span>3</div>
<div class="t" style="left:40.5px;top:542.8px;font-size:12.8px;font-weight:700;color:#111;transform:translate(-50%,-50%) rotate(-90deg)">Amps</div>
<div class="a" style="left:89px;top:658px;width:1px;height:5px;background:#222"></div>
<div class="t" style="left:89px;transform:translateX(-50%);top:665.3px;font-size:12px;font-weight:400;color:#111;letter-spacing:-0.4px">0</div>
<div class="a" style="left:181px;top:658px;width:1px;height:5px;background:#222"></div>
<div class="t" style="left:180.95171026156942px;transform:translateX(-50%);top:665.3px;font-size:12px;font-weight:400;color:#111;letter-spacing:-0.4px">0.02</div>
<div class="a" style="left:273px;top:658px;width:1px;height:5px;background:#222"></div>
<div class="t" style="left:272.90342052313883px;transform:translateX(-50%);top:665.3px;font-size:12px;font-weight:400;color:#111;letter-spacing:-0.4px">0.04</div>
<div class="a" style="left:365px;top:658px;width:1px;height:5px;background:#222"></div>
<div class="t" style="left:364.85513078470825px;transform:translateX(-50%);top:665.3px;font-size:12px;font-weight:400;color:#111;letter-spacing:-0.4px">0.06</div>
<div class="a" style="left:457px;top:658px;width:1px;height:5px;background:#222"></div>
<div class="t" style="left:456.80684104627767px;transform:translateX(-50%);top:665.3px;font-size:12px;font-weight:400;color:#111;letter-spacing:-0.4px">0.08</div>
<div class="a" style="left:546px;top:658px;width:1px;height:5px;background:#222"></div>
<div class="t" style="left:546px;transform:translateX(-50%);top:665.3px;font-size:12px;font-weight:400;color:#111;letter-spacing:-0.4px">0.099</div>
<div class="a" style="left:468px;top:433px;width:79px;height:73px;background:#b3b3b3;border-top:1px solid #e0e0e0;border-left:1px solid #e0e0e0;border-right:1px solid #777;border-bottom:1px solid #777;box-sizing:border-box"></div>
<svg class="a" style="left:470px;top:438.5px" width="14" height="14"><circle cx="7" cy="7" r="5.3" fill="#fff" stroke="#111" stroke-width="1.2"/><path d="M7 4.3 L9.7 7 L7 9.7 L4.3 7 Z" fill="#000"/></svg>
<div class="t" style="left:486px;top:439.8px;font-size:12px;font-weight:400;color:#111;letter-spacing:-0.6px">A1</div>
<div class="a" style="left:519px;top:437px;width:24px;height:18px;background:#000;border-top:1px solid #6c6c6c;border-left:1px solid #6c6c6c;border-right:1px solid #dcdcdc;border-bottom:1px solid #dcdcdc;box-sizing:border-box"></div>
<svg class="a" style="left:519px;top:437px" width="24" height="18"><polyline points="3,12 11,1.5 19,12 22.5,7" fill="none" stroke="#ffffff" stroke-width="1"/></svg>
<svg class="a" style="left:470px;top:459.5px" width="14" height="14"><circle cx="7" cy="7" r="5.3" fill="#fff" stroke="#111" stroke-width="1.2"/><path d="M7 4.3 L9.7 7 L7 9.7 L4.3 7 Z" fill="#000"/></svg>
<div class="t" style="left:486px;top:462.8px;font-size:12px;font-weight:400;color:#111;letter-spacing:-0.6px">A2</div>
<div class="a" style="left:519px;top:460px;width:24px;height:18px;background:#000;border-top:1px solid #6c6c6c;border-left:1px solid #6c6c6c;border-right:1px solid #dcdcdc;border-bottom:1px solid #dcdcdc;box-sizing:border-box"></div>
<svg class="a" style="left:519px;top:460px" width="24" height="18"><polyline points="3,12 11.5,2 20,11.5" fill="none" stroke="#ff4848" stroke-width="1"/></svg>
<svg class="a" style="left:470px;top:480.5px" width="14" height="14"><circle cx="7" cy="7" r="5.3" fill="#fff" stroke="#111" stroke-width="1.2"/><path d="M7 4.3 L9.7 7 L7 9.7 L4.3 7 Z" fill="#000"/></svg>
<div class="t" style="left:486px;top:485.8px;font-size:12px;font-weight:400;color:#111;letter-spacing:-0.6px">A3</div>
<div class="a" style="left:519px;top:483px;width:24px;height:18px;background:#000;border-top:1px solid #6c6c6c;border-left:1px solid #6c6c6c;border-right:1px solid #dcdcdc;border-bottom:1px solid #dcdcdc;box-sizing:border-box"></div>
<svg class="a" style="left:519px;top:483px" width="24" height="18"><polyline points="3,12 11,1.5 19,12 22.5,7" fill="none" stroke="#00f000" stroke-width="1"/></svg>
<svg class="a" style="left:558px;top:144px;overflow:visible" width="12" height="6"><path d="M0 6 L6.0 0 L12 6 Z" fill="#8a8a8a"/></svg>
<div class="a" style="left:558px;top:149px;width:12px;height:2px;background:#3a3a3a"></div>
<div class="a" style="left:559px;top:152px;width:9px;height:240px;background:#353535;border-left:1px solid #262626;box-sizing:border-box"></div>
<svg class="a" style="left:557px;top:394px" width="14" height="9"><path d="M1 1 L13 1 L7 8 Z" fill="#8a8a8a"/><path d="M7 8 L13 1" stroke="#4a4a4a" stroke-width="1"/></svg>
<svg class="a" style="left:546px;top:263px" width="31" height="18"><path d="M1 9.3 L30 1 L30 17 Z" fill="#3a8ff2"/><path d="M1 9.3 L30 17" stroke="#2a62b0" stroke-width="1"/><path d="M30 1 L30 17" stroke="#2a62b0" stroke-width="1"/></svg>
<div class="t" style="left:578px;top:148.8px;font-size:12px;font-weight:700;color:#111;">V Trigger</div>
<div class="t" style="left:588px;top:173.8px;font-size:12px;font-weight:700;color:#111;">Voltage</div>
<div class="t" style="left:588px;top:188.8px;font-size:12px;font-weight:700;color:#111;">Range</div>
<svg class="a" style="left:610px;top:205px" width="25" height="9"><path d="M1 8 L12.5 1 L24 8 Z" fill="#8e8e8e"/><rect x="1" y="7" width="23" height="1.2" fill="#6a6a6a"/></svg>
<div class="a" style="left:611px;top:214px;width:23px;height:92px;background:#bcbcbc;border-top:1px solid #6a6a6a;border-left:1px solid #6a6a6a;border-right:1px solid #dedede;border-bottom:1px solid #dedede;box-sizing:border-box"></div>
<div class="a" style="left:612px;top:283px;width:21px;height:22px;background:#9c9c9c"></div>
<svg class="a" style="left:610px;top:307px" width="25" height="10"><path d="M1 1 L24 1 L12.5 9 Z" fill="#8e8e8e"/><path d="M12.5 9 L24 1" stroke="#555" stroke-width="1"/></svg>
<div class="a" style="left:608px;top:272px;width:29px;height:11px;background:#000"></div>
<div class="a" style="left:610px;top:276px;width:25px;height:1px;background:#a0a0a0"></div>
<div class="t" style="right:434px;top:210.3px;font-size:12px;font-weight:400;color:#111;letter-spacing:-0.3px">100</div>
<div class="t" style="right:434px;top:232.5px;font-size:12px;font-weight:400;color:#111;letter-spacing:-0.3px">75</div>
<div class="t" style="right:434px;top:254.7px;font-size:12px;font-weight:400;color:#111;letter-spacing:-0.3px">50</div>
<div class="t" style="right:434px;top:276.9px;font-size:12px;font-weight:400;color:#111;letter-spacing:-0.3px">25</div>
<div class="t" style="right:434px;top:299.1px;font-size:12px;font-weight:400;color:#111;letter-spacing:-0.3px">0</div>
<div class="t" style="left:580px;top:329.8px;font-size:12px;font-weight:700;color:#111;">Subtract</div>
<div class="t" style="left:580px;top:344.8px;font-size:12px;font-weight:700;color:#111;">Zero Seq</div>
<div class="a" style="left:579px;top:365px;width:64px;height:24px;background:#b6b6b6;border:1px solid #111;box-sizing:border-box"></div>
<div class="a" style="left:580px;top:366px;width:62px;height:22px;border-top:2px solid #f2f2f2;border-left:2px solid #f2f2f2;border-right:2px solid #666;border-bottom:2px solid #666;box-sizing:border-box"></div>
<div class="t" style="left:610.6px;transform:translateX(-50%);top:372.3px;font-size:11.5px;font-weight:700;color:#000;letter-spacing:-0.2px">OFF</div>
<svg class="a" style="left:559px;top:425px;overflow:visible" width="11" height="6"><path d="M0 6 L5.5 0 L11 6 Z" fill="#9a9a9a"/></svg>
<div class="a" style="left:559px;top:431px;width:11px;height:1px;background:#7c7c7c"></div>
<div class="a" style="left:559px;top:433px;width:9px;height:223px;background:#8c8c8c;border-left:1px solid #7a7a7a;box-sizing:border-box"></div>
<div class="a" style="left:559px;top:656px;width:11px;height:1px;background:#7c7c7c"></div>
<svg class="a" style="left:559px;top:658px;overflow:visible" width="11" height="6"><path d="M0 0 L11 0 L5.5 6 Z" fill="#9a9a9a"/></svg>
<svg class="a" style="left:546px;top:536px" width="31" height="17"><path d="M1 8.5 L30 1 L30 16 Z" fill="#85a7d0"/></svg>
<div class="a" style="left:574px;top:427px;width:51px;height:17px;background:#b9b9b9"></div>
<div class="t" style="left:575.5px;top:429.8px;font-size:12px;font-weight:700;color:#8a8a8a;">I Trigger</div>
<div class="t" style="left:587px;top:455.8px;font-size:12px;font-weight:700;color:#111;">Current</div>
<div class="t" style="left:587px;top:470.8px;font-size:12px;font-weight:700;color:#111;">Range</div>
<svg class="a" style="left:609px;top:487px" width="24" height="9"><path d="M1 8 L12.0 1 L23 8 Z" fill="#8e8e8e"/><rect x="1" y="7" width="22" height="1.2" fill="#6a6a6a"/></svg>
<div class="a" style="left:610px;top:496px;width:22px;height:99px;background:#bcbcbc;border-top:1px solid #6a6a6a;border-left:1px solid #6a6a6a;border-right:1px solid #dedede;border-bottom:1px solid #dedede;box-sizing:border-box"></div>
<svg class="a" style="left:609px;top:596px" width="24" height="10"><path d="M1 1 L23 1 L12.0 9 Z" fill="#8e8e8e"/><path d="M12.0 9 L23 1" stroke="#555" stroke-width="1"/></svg>
<div class="a" style="left:607px;top:582px;width:28px;height:11px;background:#000"></div>
<div class="a" style="left:609px;top:586px;width:24px;height:1px;background:#a0a0a0"></div>
<div class="t" style="right:436px;top:491.7px;font-size:12px;font-weight:400;color:#111;letter-spacing:-0.3px">50</div>
<div class="t" style="right:436px;top:511.0px;font-size:12px;font-weight:400;color:#111;letter-spacing:-0.3px">40</div>
<div class="t" style="right:436px;top:530.2px;font-size:12px;font-weight:400;color:#111;letter-spacing:-0.3px">30</div>
<div class="t" style="right:436px;top:549.5px;font-size:12px;font-weight:400;color:#111;letter-spacing:-0.3px">20</div>
<div class="t" style="right:436px;top:568.7px;font-size:12px;font-weight:400;color:#111;letter-spacing:-0.3px">10</div>
<div class="t" style="right:436px;top:588.0px;font-size:12px;font-weight:400;color:#111;letter-spacing:-0.3px">0</div>
<div class="a" style="left:584px;top:622px;width:54px;height:36px;background:#b6b6b6;border:1px solid #111;box-sizing:border-box"></div>
<div class="a" style="left:585px;top:623px;width:52px;height:34px;border-top:2px solid #f2f2f2;border-left:2px solid #f2f2f2;border-right:2px solid #666;border-bottom:2px solid #666;box-sizing:border-box"></div>
<div class="t" style="left:611px;transform:translateX(-50%);top:628.8px;font-size:11.5px;font-weight:700;color:#000;letter-spacing:-0.2px">Zero</div>
<div class="t" style="left:611px;transform:translateX(-50%);top:641.3px;font-size:11.5px;font-weight:700;color:#000;letter-spacing:-0.2px">Amps</div>
<div class="a" style="left:662px;top:110px;width:363px;height:366px;border-top:1px solid #dedede;border-left:1px solid #dedede;border-right:1px solid #5a5a5a;border-bottom:1px solid #5a5a5a;box-sizing:border-box"></div>
<div class="a" style="left:664px;top:112px;width:359px;height:362px;border-top:1px solid #5a5a5a;border-left:1px solid #5a5a5a;border-right:1px solid #dedede;border-bottom:1px solid #dedede;box-sizing:border-box"></div>
<div class="t" style="left:702px;top:124.8px;font-size:15px;font-weight:700;color:#111;letter-spacing:0.45px">Electrical Measurements</div>
<div class="t" style="left:683px;top:166.2px;font-size:11px;font-weight:700;color:#111;letter-spacing:-0.25px">Ch1 Trigger Source</div>
<div class="a" style="left:683px;top:176px;width:97px;height:1px;background:#111"></div>
<div class="t" style="left:683px;top:185.7px;font-size:11px;font-weight:700;color:#111;">Amps</div>
<div class="t" style="left:761px;top:185.2px;font-size:11px;font-weight:700;color:#111;">Volts</div>
<svg class="a" style="left:736px;top:179px" width="26" height="22"><path d="M3 10 L21.5 1.5 M3 10 L21.5 18.5" fill="none" stroke="#333" stroke-width="0.9"/><rect x="21" y="1" width="3" height="18" fill="#1a1a1a"/><rect x="22" y="2" width="1" height="16" fill="#888"/><circle cx="3.5" cy="10" r="2.6" fill="#e0e0e0" stroke="#8a8a8a" stroke-width="0.8"/></svg>
<div class="t" style="left:827px;top:161.8px;font-size:11.5px;font-weight:700;color:#111;letter-spacing:0.05px">Fundamental Frequency</div>
<div class="a" style="left:836px;top:177px;width:66px;height:28px;background:#cbcbcb;border-top:1px solid #e6e6e6;border-left:1px solid #e6e6e6;border-right:1px solid #666;border-bottom:1px solid #666;box-sizing:border-box"></div>
<div class="a" style="left:838px;top:179px;width:62px;height:24px;background:#d5d5d5;border-top:1px solid #707070;border-left:1px solid #707070;border-right:1px solid #fafafa;border-bottom:1px solid #fafafa;box-sizing:border-box"></div>
<div class="t" style="left:841px;top:184.0px;font-size:16px;font-weight:400;color:#111;">60.0</div>
<div class="t" style="left:910px;top:186.8px;font-size:12px;font-weight:700;color:#111;">Hz</div>
<div class="a" style="left:690px;top:213px;width:299px;height:1px;background:#111"></div>
<div class="a" style="left:795px;top:221px;width:1px;height:250px;background:#111"></div>
<div class="a" style="left:925px;top:222px;width:1px;height:249px;background:#111"></div>
<div class="t" style="left:676px;top:224.3px;font-size:12px;font-weight:700;color:#111;">V1 RMS</div>
<div class="a" style="left:674px;top:239px;width:115px;height:29px;background:#cbcbcb;border-top:1px solid #e6e6e6;border-left:1px solid #e6e6e6;border-right:1px solid #666;border-bottom:1px solid #666;box-sizing:border-box"></div>
<div class="a" style="left:676px;top:241px;width:111px;height:25px;background:#d5d5d5;border-top:1px solid #707070;border-left:1px solid #707070;border-right:1px solid #fafafa;border-bottom:1px solid #fafafa;box-sizing:border-box"></div>
<div class="t" style="left:679px;top:246.5px;font-size:16px;font-weight:400;color:#111;">9.98</div>
<svg class="a" style="left:729px;top:243px" width="24" height="20"><path d="M2.5 17.5 L13.5 1.5 M2 17.5 L21.5 17.5" stroke="#111" stroke-width="1.1" fill="none"/></svg>
<div class="t" style="left:742.5px;top:246.7px;font-size:11px;font-weight:700;color:#111;letter-spacing:-0.15px">-1.6</div>
<div class="t" style="left:804px;top:223.1px;font-size:12px;font-weight:700;color:#111;">A1 RMS</div>
<div class="a" style="left:802px;top:238.5px;width:115px;height:29px;background:#cbcbcb;border-top:1px solid #e6e6e6;border-left:1px solid #e6e6e6;border-right:1px solid #666;border-bottom:1px solid #666;box-sizing:border-box"></div>
<div class="a" style="left:804px;top:240.5px;width:111px;height:25px;background:#d5d5d5;border-top:1px solid #707070;border-left:1px solid #707070;border-right:1px solid #fafafa;border-bottom:1px solid #fafafa;box-sizing:border-box"></div>
<div class="t" style="left:807px;top:246.5px;font-size:16px;font-weight:400;color:#111;">0.93</div>
<svg class="a" style="left:856px;top:242.5px" width="24" height="20"><path d="M2.5 17.5 L13.5 1.5 M2 17.5 L21.5 17.5" stroke="#111" stroke-width="1.1" fill="none"/></svg>
<div class="t" style="left:869.5px;top:246.2px;font-size:11px;font-weight:700;color:#111;letter-spacing:-0.15px">-47.0</div>
<div class="t" style="left:938px;top:224.3px;font-size:12px;font-weight:700;color:#111;">Ch1 Watts</div>
<div class="a" style="left:937px;top:239px;width:66px;height:28px;background:#cbcbcb;border-top:1px solid #e6e6e6;border-left:1px solid #e6e6e6;border-right:1px solid #666;border-bottom:1px solid #666;box-sizing:border-box"></div>
<div class="a" style="left:939px;top:241px;width:62px;height:24px;background:#d5d5d5;border-top:1px solid #707070;border-left:1px solid #707070;border-right:1px solid #fafafa;border-bottom:1px solid #fafafa;box-sizing:border-box"></div>
<div class="t" style="left:941px;top:246.5px;font-size:16px;font-weight:400;color:#111;">6.6</div>
<div class="t" style="left:676px;top:285.6px;font-size:12px;font-weight:700;color:#111;">V2 RMS</div>
<div class="a" style="left:674px;top:300px;width:115px;height:29px;background:#cbcbcb;border-top:1px solid #e6e6e6;border-left:1px solid #e6e6e6;border-right:1px solid #666;border-bottom:1px solid #666;box-sizing:border-box"></div>
<div class="a" style="left:676px;top:302px;width:111px;height:25px;background:#d5d5d5;border-top:1px solid #707070;border-left:1px solid #707070;border-right:1px solid #fafafa;border-bottom:1px solid #fafafa;box-sizing:border-box"></div>
<div class="t" style="left:679px;top:307.5px;font-size:16px;font-weight:400;color:#111;">10.06</div>
<svg class="a" style="left:729px;top:304px" width="24" height="20"><path d="M2.5 17.5 L13.5 1.5 M2 17.5 L21.5 17.5" stroke="#111" stroke-width="1.1" fill="none"/></svg>
<div class="t" style="left:742.5px;top:307.7px;font-size:11px;font-weight:700;color:#111;letter-spacing:-0.15px">-241.9</div>
<div class="t" style="left:804px;top:284.4px;font-size:12px;font-weight:700;color:#111;">A2 RMS</div>
<div class="a" style="left:802px;top:299.5px;width:115px;height:29px;background:#cbcbcb;border-top:1px solid #e6e6e6;border-left:1px solid #e6e6e6;border-right:1px solid #666;border-bottom:1px solid #666;box-sizing:border-box"></div>
<div class="a" style="left:804px;top:301.5px;width:111px;height:25px;background:#d5d5d5;border-top:1px solid #707070;border-left:1px solid #707070;border-right:1px solid #fafafa;border-bottom:1px solid #fafafa;box-sizing:border-box"></div>
<div class="t" style="left:807px;top:307.5px;font-size:16px;font-weight:400;color:#111;">0.95</div>
<svg class="a" style="left:856px;top:303.5px" width="24" height="20"><path d="M2.5 17.5 L13.5 1.5 M2 17.5 L21.5 17.5" stroke="#111" stroke-width="1.1" fill="none"/></svg>
<div class="t" style="left:869.5px;top:307.2px;font-size:11px;font-weight:700;color:#111;letter-spacing:-0.15px">72.0</div>
<div class="t" style="left:938px;top:285.6px;font-size:12px;font-weight:700;color:#111;">Ch2 Watts</div>
<div class="a" style="left:937px;top:300px;width:66px;height:28px;background:#cbcbcb;border-top:1px solid #e6e6e6;border-left:1px solid #e6e6e6;border-right:1px solid #666;border-bottom:1px solid #666;box-sizing:border-box"></div>
<div class="a" style="left:939px;top:302px;width:62px;height:24px;background:#d5d5d5;border-top:1px solid #707070;border-left:1px solid #707070;border-right:1px solid #fafafa;border-bottom:1px solid #fafafa;box-sizing:border-box"></div>
<div class="t" style="left:941px;top:307.5px;font-size:16px;font-weight:400;color:#111;">6.3</div>
<div class="t" style="left:676px;top:346.0px;font-size:12px;font-weight:700;color:#111;">V3 RMS</div>
<div class="a" style="left:674px;top:361px;width:115px;height:29px;background:#cbcbcb;border-top:1px solid #e6e6e6;border-left:1px solid #e6e6e6;border-right:1px solid #666;border-bottom:1px solid #666;box-sizing:border-box"></div>
<div class="a" style="left:676px;top:363px;width:111px;height:25px;background:#d5d5d5;border-top:1px solid #707070;border-left:1px solid #707070;border-right:1px solid #fafafa;border-bottom:1px solid #fafafa;box-sizing:border-box"></div>
<div class="t" style="left:679px;top:368.5px;font-size:16px;font-weight:400;color:#111;">9.93</div>
<svg class="a" style="left:729px;top:365px" width="24" height="20"><path d="M2.5 17.5 L13.5 1.5 M2 17.5 L21.5 17.5" stroke="#111" stroke-width="1.1" fill="none"/></svg>
<div class="t" style="left:742.5px;top:368.7px;font-size:11px;font-weight:700;color:#111;letter-spacing:-0.15px">-121.3</div>
<div class="t" style="left:804px;top:344.8px;font-size:12px;font-weight:700;color:#111;">A3 RMS</div>
<div class="a" style="left:802px;top:360.5px;width:115px;height:29px;background:#cbcbcb;border-top:1px solid #e6e6e6;border-left:1px solid #e6e6e6;border-right:1px solid #666;border-bottom:1px solid #666;box-sizing:border-box"></div>
<div class="a" style="left:804px;top:362.5px;width:111px;height:25px;background:#d5d5d5;border-top:1px solid #707070;border-left:1px solid #707070;border-right:1px solid #fafafa;border-bottom:1px solid #fafafa;box-sizing:border-box"></div>
<div class="t" style="left:807px;top:368.5px;font-size:16px;font-weight:400;color:#111;">0.96</div>
<svg class="a" style="left:856px;top:364.5px" width="24" height="20"><path d="M2.5 17.5 L13.5 1.5 M2 17.5 L21.5 17.5" stroke="#111" stroke-width="1.1" fill="none"/></svg>
<div class="t" style="left:869.5px;top:368.2px;font-size:11px;font-weight:700;color:#111;letter-spacing:-0.15px">-167.1</div>
<div class="t" style="left:938px;top:346.0px;font-size:12px;font-weight:700;color:#111;">Ch3 Watts</div>
<div class="a" style="left:937px;top:361px;width:66px;height:28px;background:#cbcbcb;border-top:1px solid #e6e6e6;border-left:1px solid #e6e6e6;border-right:1px solid #666;border-bottom:1px solid #666;box-sizing:border-box"></div>
<div class="a" style="left:939px;top:363px;width:62px;height:24px;background:#d5d5d5;border-top:1px solid #707070;border-left:1px solid #707070;border-right:1px solid #fafafa;border-bottom:1px solid #fafafa;box-sizing:border-box"></div>
<div class="t" style="left:941px;top:368.5px;font-size:16px;font-weight:400;color:#111;">6.8</div>
<div class="t" style="left:687px;top:403.6px;font-size:14px;font-weight:700;color:#111;letter-spacing:0.1px">Avg Volts</div>
<div class="a" style="left:686px;top:425px;width:80px;height:28px;background:#cbcbcb;border-top:1px solid #e6e6e6;border-left:1px solid #e6e6e6;border-right:1px solid #666;border-bottom:1px solid #666;box-sizing:border-box"></div>
<div class="a" style="left:688px;top:427px;width:76px;height:24px;background:#d5d5d5;border-top:1px solid #707070;border-left:1px solid #707070;border-right:1px solid #fafafa;border-bottom:1px solid #fafafa;box-sizing:border-box"></div>
<div class="t" style="left:691px;top:431.6px;font-size:17px;font-weight:700;color:#111;">9.99</div>
<div class="t" style="left:815px;top:402.1px;font-size:14px;font-weight:700;color:#111;letter-spacing:0.65px">Avg Amps</div>
<div class="a" style="left:818px;top:425px;width:79px;height:28px;background:#cbcbcb;border-top:1px solid #e6e6e6;border-left:1px solid #e6e6e6;border-right:1px solid #666;border-bottom:1px solid #666;box-sizing:border-box"></div>
<div class="a" style="left:820px;top:427px;width:75px;height:24px;background:#d5d5d5;border-top:1px solid #707070;border-left:1px solid #707070;border-right:1px solid #fafafa;border-bottom:1px solid #fafafa;box-sizing:border-box"></div>
<div class="t" style="left:822px;top:431.6px;font-size:17px;font-weight:700;color:#111;">0.95</div>
<div class="t" style="left:930.5px;top:404.1px;font-size:14px;font-weight:700;color:#111;letter-spacing:0.6px">Tot Power</div>
<div class="a" style="left:937px;top:425px;width:66px;height:28px;background:#cbcbcb;border-top:1px solid #e6e6e6;border-left:1px solid #e6e6e6;border-right:1px solid #666;border-bottom:1px solid #666;box-sizing:border-box"></div>
<div class="a" style="left:939px;top:427px;width:62px;height:24px;background:#d5d5d5;border-top:1px solid #707070;border-left:1px solid #707070;border-right:1px solid #fafafa;border-bottom:1px solid #fafafa;box-sizing:border-box"></div>
<div class="t" style="left:942px;top:431.6px;font-size:17px;font-weight:700;color:#111;">19.7</div>
<div class="a" style="left:662px;top:478px;width:363px;height:210px;border-top:1px solid #dedede;border-left:1px solid #dedede;border-right:1px solid #5a5a5a;border-bottom:1px solid #5a5a5a;box-sizing:border-box"></div>
<div class="a" style="left:664px;top:480px;width:359px;height:206px;border-top:1px solid #5a5a5a;border-left:1px solid #5a5a5a;border-right:1px solid #dedede;border-bottom:1px solid #dedede;box-sizing:border-box"></div>
<div class="t" style="left:682px;top:495.3px;font-size:11.5px;font-weight:700;color:#111;letter-spacing:-0.15px">Sampling Period (mS)</div>
<div class="a" style="left:684px;top:512px;width:311px;height:22px;background:#b3b3b3"></div>
<svg class="a" style="left:684px;top:514px;overflow:visible" width="7" height="18"><path d="M7 0 L0 9.0 L7 18 Z" fill="#8e8e8e" stroke="#777" stroke-width="1"/></svg>
<div class="a" style="left:690px;top:514px;width:1px;height:18px;background:#e6e6e6"></div>
<svg class="a" style="left:987px;top:514px;overflow:visible" width="7" height="18"><path d="M0 0 L7 9.0 L0 18 Z" fill="#7e7e7e" stroke="#6a6a6a" stroke-width="1"/></svg>
<div class="a" style="left:691px;top:514px;width:295px;height:18px;background:#333;border-top:1px solid #222;box-sizing:border-box"></div>
<div class="a" style="left:891px;top:511px;width:10px;height:24px;background:#3a8ff2;border:1px solid #2a6cc0;box-sizing:border-box"></div>
<div class="a" style="left:892px;top:512px;width:1px;height:22px;background:#a8d0ff"></div>
<div class="a" style="left:895px;top:512px;width:1px;height:22px;background:#1c3f78"></div>
<div class="a" style="left:692px;top:536px;width:1px;height:6px;background:#222"></div>
<div class="a" style="left:712px;top:536px;width:1px;height:3px;background:#222"></div>
<div class="a" style="left:724px;top:536px;width:1px;height:3px;background:#222"></div>
<div class="a" style="left:733px;top:536px;width:1px;height:3px;background:#222"></div>
<div class="a" style="left:739px;top:536px;width:1px;height:3px;background:#222"></div>
<div class="a" style="left:745px;top:536px;width:1px;height:3px;background:#222"></div>
<div class="a" style="left:749px;top:536px;width:1px;height:3px;background:#222"></div>
<div class="a" style="left:753px;top:536px;width:1px;height:3px;background:#222"></div>
<div class="a" style="left:757px;top:536px;width:1px;height:3px;background:#222"></div>
<div class="a" style="left:760px;top:536px;width:1px;height:6px;background:#222"></div>
<div class="a" style="left:780px;top:536px;width:1px;height:3px;background:#222"></div>
<div class="a" style="left:792px;top:536px;width:1px;height:3px;background:#222"></div>
<div class="a" style="left:801px;top:536px;width:1px;height:3px;background:#222"></div>
<div class="a" style="left:807px;top:536px;width:1px;height:3px;background:#222"></div>
<div class="a" style="left:813px;top:536px;width:1px;height:3px;background:#222"></div>
<div class="a" style="left:817px;top:536px;width:1px;height:3px;background:#222"></div>
<div class="a" style="left:821px;top:536px;width:1px;height:3px;background:#222"></div>
<div class="a" style="left:825px;top:536px;width:1px;height:3px;background:#222"></div>
<div class="a" style="left:828px;top:536px;width:1px;height:6px;background:#222"></div>
<div class="a" style="left:848px;top:536px;width:1px;height:3px;background:#222"></div>
<div class="a" style="left:860px;top:536px;width:1px;height:3px;background:#222"></div>
<div class="a" style="left:869px;top:536px;width:1px;height:3px;background:#222"></div>
<div class="a" style="left:875px;top:536px;width:1px;height:3px;background:#222"></div>
<div class="a" style="left:881px;top:536px;width:1px;height:3px;background:#222"></div>
<div class="a" style="left:885px;top:536px;width:1px;height:3px;background:#222"></div>
<div class="a" style="left:889px;top:536px;width:1px;height:3px;background:#222"></div>
<div class="a" style="left:893px;top:536px;width:1px;height:3px;background:#222"></div>
<div class="a" style="left:896px;top:536px;width:1px;height:6px;background:#222"></div>
<div class="a" style="left:916px;top:536px;width:1px;height:3px;background:#222"></div>
<div class="a" style="left:928px;top:536px;width:1px;height:3px;background:#222"></div>
<div class="a" style="left:937px;top:536px;width:1px;height:3px;background:#222"></div>
<div class="a" style="left:943px;top:536px;width:1px;height:3px;background:#222"></div>
<div class="a" style="left:949px;top:536px;width:1px;height:3px;background:#222"></div>
<div class="a" style="left:953px;top:536px;width:1px;height:3px;background:#222"></div>
<div class="a" style="left:957px;top:536px;width:1px;height:3px;background:#222"></div>
<div class="a" style="left:960px;top:536px;width:1px;height:3px;background:#222"></div>
<div class="a" style="left:964px;top:536px;width:1px;height:6px;background:#222"></div>
<div class="a" style="left:984px;top:536px;width:1px;height:3px;background:#222"></div>
<div class="a" style="left:984px;top:536px;width:1px;height:6px;background:#222"></div>
<div class="t" style="left:692.0px;transform:translateX(-50%);top:542.9px;font-size:12.5px;font-weight:700;color:#111;">0.1</div>
<div class="t" style="left:759.8907146182137px;transform:translateX(-50%);top:542.9px;font-size:12.5px;font-weight:700;color:#111;">1</div>
<div class="t" style="left:827.7814292364274px;transform:translateX(-50%);top:542.9px;font-size:12.5px;font-weight:700;color:#111;">10</div>
<div class="t" style="left:895.6721438546409px;transform:translateX(-50%);top:542.9px;font-size:12.5px;font-weight:700;color:#111;">100</div>
<div class="t" style="left:984.0px;transform:translateX(-50%);top:542.9px;font-size:12.5px;font-weight:700;color:#111;">2000</div>
<div class="t" style="left:690px;top:577.8px;font-size:12px;font-weight:700;color:#111;">Filter</div>
<div class="a" style="left:679px;top:594px;width:57px;height:26px;background:#b6b6b6;border:1px solid #111;box-sizing:border-box"></div>
<div class="a" style="left:680px;top:595px;width:55px;height:24px;border-top:2px solid #f2f2f2;border-left:2px solid #f2f2f2;border-right:2px solid #666;border-bottom:2px solid #666;box-sizing:border-box"></div>
<div class="t" style="left:706.7px;transform:translateX(-50%);top:602.8px;font-size:11.5px;font-weight:700;color:#000;letter-spacing:-0.2px">OFF</div>
<div class="a" style="left:761px;top:570px;width:127px;height:17px;background:#c8c8c8"></div>
<div class="t" style="left:763px;top:573.3px;font-size:12px;font-weight:700;color:#858585;letter-spacing:-0.1px">Cutoff Frequency (Hz)</div>
<div class="a" style="left:753px;top:595px;width:245px;height:21px;background:#c8c8c8"></div>
<svg class="a" style="left:754px;top:597px;overflow:visible" width="7" height="16"><path d="M7 0 L0 8.0 L7 16 Z" fill="#b0b0b0" stroke="#999" stroke-width="1"/></svg>
<svg class="a" style="left:990px;top:597px;overflow:visible" width="7" height="16"><path d="M0 0 L7 8.0 L0 16 Z" fill="#b0b0b0" stroke="#999" stroke-width="1"/></svg>
<div class="a" style="left:761px;top:596px;width:229px;height:18px;background:#999;border-right:2px solid #d0d0d0;box-sizing:border-box"></div>
<div class="a" style="left:751px;top:621px;width:259px;height:22px;background:#cdcdcd"></div>
<div class="a" style="left:762px;top:623px;width:1px;height:5px;background:#9a9a9a"></div>
<div class="a" style="left:785px;top:623px;width:1px;height:3px;background:#9a9a9a"></div>
<div class="a" style="left:798px;top:623px;width:1px;height:3px;background:#9a9a9a"></div>
<div class="a" style="left:807px;top:623px;width:1px;height:3px;background:#9a9a9a"></div>
<div class="a" style="left:815px;top:623px;width:1px;height:3px;background:#9a9a9a"></div>
<div class="a" style="left:821px;top:623px;width:1px;height:3px;background:#9a9a9a"></div>
<div class="a" style="left:826px;top:623px;width:1px;height:3px;background:#9a9a9a"></div>
<div class="a" style="left:830px;top:623px;width:1px;height:3px;background:#9a9a9a"></div>
<div class="a" style="left:834px;top:623px;width:1px;height:3px;background:#9a9a9a"></div>
<div class="a" style="left:837px;top:623px;width:1px;height:5px;background:#9a9a9a"></div>
<div class="a" style="left:860px;top:623px;width:1px;height:3px;background:#9a9a9a"></div>
<div class="a" style="left:873px;top:623px;width:1px;height:3px;background:#9a9a9a"></div>
<div class="a" style="left:883px;top:623px;width:1px;height:3px;background:#9a9a9a"></div>
<div class="a" style="left:890px;top:623px;width:1px;height:3px;background:#9a9a9a"></div>
<div class="a" style="left:896px;top:623px;width:1px;height:3px;background:#9a9a9a"></div>
<div class="a" style="left:901px;top:623px;width:1px;height:3px;background:#9a9a9a"></div>
<div class="a" style="left:905px;top:623px;width:1px;height:3px;background:#9a9a9a"></div>
<div class="a" style="left:909px;top:623px;width:1px;height:3px;background:#9a9a9a"></div>
<div class="a" style="left:913px;top:623px;width:1px;height:5px;background:#9a9a9a"></div>
<div class="a" style="left:935px;top:623px;width:1px;height:3px;background:#9a9a9a"></div>
<div class="a" style="left:949px;top:623px;width:1px;height:3px;background:#9a9a9a"></div>
<div class="a" style="left:958px;top:623px;width:1px;height:3px;background:#9a9a9a"></div>
<div class="a" style="left:965px;top:623px;width:1px;height:3px;background:#9a9a9a"></div>
<div class="a" style="left:971px;top:623px;width:1px;height:3px;background:#9a9a9a"></div>
<div class="a" style="left:976px;top:623px;width:1px;height:3px;background:#9a9a9a"></div>
<div class="a" style="left:981px;top:623px;width:1px;height:3px;background:#9a9a9a"></div>
<div class="a" style="left:985px;top:623px;width:1px;height:3px;background:#9a9a9a"></div>
<div class="a" style="left:988px;top:623px;width:1px;height:5px;background:#9a9a9a"></div>
<div class="t" style="left:762.0px;transform:translateX(-50%);top:628.9px;font-size:12.5px;font-weight:400;color:#787878;letter-spacing:-0.2px">100</div>
<div class="t" style="left:837.3333333333334px;transform:translateX(-50%);top:628.9px;font-size:12.5px;font-weight:400;color:#787878;letter-spacing:-0.2px">1000</div>
<div class="t" style="left:912.6666666666666px;transform:translateX(-50%);top:628.9px;font-size:12.5px;font-weight:400;color:#787878;letter-spacing:-0.2px">10000</div>
<div class="t" style="left:988.0px;transform:translateX(-50%);top:628.9px;font-size:12.5px;font-weight:400;color:#787878;letter-spacing:-0.2px">100000</div>
<div class="a" style="left:866px;top:613px;width:14px;height:8px;background:#cdcdcd"></div>
<svg class="a" style="left:866px;top:589px" width="14" height="34"><path d="M0.5 0.5 L13.5 0.5 L8 24 L7 33 L6 24 Z" fill="#9cc6f2" stroke="#7aaee6" stroke-width="1"/></svg>
<div class="a" style="left:9px;top:692px;width:1016px;height:74px;border-top:1px solid #dedede;border-left:1px solid #dedede;border-right:1px solid #5a5a5a;border-bottom:1px solid #5a5a5a;box-sizing:border-box"></div>
<div class="a" style="left:11px;top:694px;width:1012px;height:70px;border-top:1px solid #5a5a5a;border-left:1px solid #5a5a5a;border-right:1px solid #dedede;border-bottom:1px solid #dedede;box-sizing:border-box"></div>
<div class="a" style="left:127px;top:705px;width:79px;height:41px;background:#b6b6b6;border:1px solid #111;box-sizing:border-box"></div>
<div class="a" style="left:128px;top:706px;width:77px;height:39px;border-top:2px solid #f2f2f2;border-left:2px solid #f2f2f2;border-right:2px solid #666;border-bottom:2px solid #666;box-sizing:border-box"></div>
<div class="t" style="left:166px;transform:translateX(-50%);top:720.9px;font-size:12.5px;font-weight:700;color:#f00000;letter-spacing:-0.1px">Pause</div>
<div class="a" style="left:244px;top:705px;width:81px;height:41px;background:#d0d0d0;border:1px solid #8a8a8a;box-sizing:border-box"></div>
<div class="a" style="left:245px;top:706px;width:79px;height:39px;border-top:2px solid #ececec;border-left:2px solid #ececec;border-right:2px solid #a4a4a4;border-bottom:2px solid #a4a4a4;box-sizing:border-box"></div>
<div class="t" style="left:283.5px;transform:translateX(-50%);top:713.8px;font-size:11.5px;font-weight:700;color:#7c7c7c;letter-spacing:-0.2px">Save</div>
<div class="t" style="left:283.5px;transform:translateX(-50%);top:726.3px;font-size:11.5px;font-weight:700;color:#7c7c7c;letter-spacing:-0.2px">Data</div>
<div class="a" style="left:369px;top:728px;width:193px;height:3px;background:#bcbcbc"></div>
<div class="a" style="left:363px;top:707px;width:6px;height:22px;background:#d4d4d4"></div>
<svg class="a" style="left:363px;top:708px" width="8" height="20"><path d="M6 1 L1.5 10.0 L6 19" fill="none" stroke="#777" stroke-width="0.9"/></svg>
<div class="a" style="left:377px;top:708px;width:177px;height:20px;background:#909090;border-top:1px solid #7c7c7c;border-left:1px solid #7c7c7c;box-sizing:border-box"></div>
<div class="a" style="left:554px;top:707px;width:8px;height:23px;background:#d4d4d4"></div>
<svg class="a" style="left:554px;top:708px" width="8" height="20"><path d="M2 1 L6.5 10.0 L2 19" fill="none" stroke="#777" stroke-width="0.9"/></svg>
<div class="a" style="left:369px;top:705px;width:8px;height:27px;background:#9ec9f7;border:1px solid #7fb0ea;box-sizing:border-box"></div>
<div class="a" style="left:373px;top:706px;width:1px;height:25px;background:#d8eafc"></div>
<div class="a" style="left:369px;top:731px;width:190px;height:23px;background:#d3d3d3"></div>
<div class="a" style="left:373px;top:732px;width:1px;height:5px;background:#666"></div>
<div class="a" style="left:377px;top:732px;width:1px;height:3px;background:#666"></div>
<div class="a" style="left:387px;top:732px;width:1px;height:3px;background:#666"></div>
<div class="a" style="left:396px;top:732px;width:1px;height:3px;background:#666"></div>
<div class="a" style="left:405px;top:732px;width:1px;height:3px;background:#666"></div>
<div class="a" style="left:414px;top:732px;width:1px;height:5px;background:#666"></div>
<div class="a" style="left:423px;top:732px;width:1px;height:3px;background:#666"></div>
<div class="a" style="left:432px;top:732px;width:1px;height:3px;background:#666"></div>
<div class="a" style="left:441px;top:732px;width:1px;height:3px;background:#666"></div>
<div class="a" style="left:451px;top:732px;width:1px;height:3px;background:#666"></div>
<div class="a" style="left:460px;top:732px;width:1px;height:5px;background:#666"></div>
<div class="a" style="left:469px;top:732px;width:1px;height:3px;background:#666"></div>
<div class="a" style="left:478px;top:732px;width:1px;height:3px;background:#666"></div>
<div class="a" style="left:487px;top:732px;width:1px;height:3px;background:#666"></div>
<div class="a" style="left:496px;top:732px;width:1px;height:3px;background:#666"></div>
<div class="a" style="left:505px;top:732px;width:1px;height:5px;background:#666"></div>
<div class="a" style="left:515px;top:732px;width:1px;height:3px;background:#666"></div>
<div class="a" style="left:524px;top:732px;width:1px;height:3px;background:#666"></div>
<div class="a" style="left:533px;top:732px;width:1px;height:3px;background:#666"></div>
<div class="a" style="left:542px;top:732px;width:1px;height:3px;background:#666"></div>
<div class="a" style="left:551px;top:732px;width:1px;height:5px;background:#666"></div>
<div class="t" style="left:373.4px;transform:translateX(-50%);top:738.9px;font-size:12.5px;font-weight:400;color:#6e6e6e;letter-spacing:-0.3px">1</div>
<div class="t" style="left:414.5230769230769px;transform:translateX(-50%);top:738.9px;font-size:12.5px;font-weight:400;color:#6e6e6e;letter-spacing:-0.3px">10</div>
<div class="t" style="left:460.2153846153846px;transform:translateX(-50%);top:738.9px;font-size:12.5px;font-weight:400;color:#6e6e6e;letter-spacing:-0.3px">20</div>
<div class="t" style="left:505.90769230769234px;transform:translateX(-50%);top:738.9px;font-size:12.5px;font-weight:400;color:#6e6e6e;letter-spacing:-0.3px">30</div>
<div class="t" style="left:551.6px;transform:translateX(-50%);top:738.9px;font-size:12.5px;font-weight:400;color:#6e6e6e;letter-spacing:-0.3px">40</div>
<div class="a" style="left:571px;top:708px;width:34px;height:15px;background:#cbcbcb"></div>
<div class="t" style="left:573px;top:710.3px;font-size:11.5px;font-weight:700;color:#7a7a7a;letter-spacing:-0.15px">Zoom</div>
<div class="a" style="left:652px;top:725px;width:203px;height:3px;background:#bcbcbc"></div>
<div class="a" style="left:646px;top:707px;width:6px;height:19px;background:#d4d4d4"></div>
<svg class="a" style="left:646px;top:708px" width="8" height="17"><path d="M6 1 L1.5 8.5 L6 16" fill="none" stroke="#777" stroke-width="0.9"/></svg>
<div class="a" style="left:660px;top:708px;width:186px;height:17px;background:#909090;border-top:1px solid #7c7c7c;border-left:1px solid #7c7c7c;box-sizing:border-box"></div>
<div class="a" style="left:846px;top:707px;width:9px;height:20px;background:#d4d4d4"></div>
<svg class="a" style="left:846px;top:708px" width="8" height="17"><path d="M2 1 L6.5 8.5 L2 16" fill="none" stroke="#777" stroke-width="0.9"/></svg>
<div class="a" style="left:652px;top:705px;width:8px;height:24px;background:#9ec9f7;border:1px solid #7fb0ea;box-sizing:border-box"></div>
<div class="a" style="left:656px;top:706px;width:1px;height:22px;background:#d8eafc"></div>
<div class="a" style="left:652px;top:730px;width:197px;height:21px;background:#d3d3d3"></div>
<div class="a" style="left:656px;top:731px;width:1px;height:5px;background:#666"></div>
<div class="a" style="left:665px;top:731px;width:1px;height:3px;background:#666"></div>
<div class="a" style="left:675px;top:731px;width:1px;height:3px;background:#666"></div>
<div class="a" style="left:684px;top:731px;width:1px;height:3px;background:#666"></div>
<div class="a" style="left:694px;top:731px;width:1px;height:5px;background:#666"></div>
<div class="a" style="left:703px;top:731px;width:1px;height:3px;background:#666"></div>
<div class="a" style="left:712px;top:731px;width:1px;height:3px;background:#666"></div>
<div class="a" style="left:722px;top:731px;width:1px;height:3px;background:#666"></div>
<div class="a" style="left:731px;top:731px;width:1px;height:5px;background:#666"></div>
<div class="a" style="left:741px;top:731px;width:1px;height:3px;background:#666"></div>
<div class="a" style="left:750px;top:731px;width:1px;height:3px;background:#666"></div>
<div class="a" style="left:759px;top:731px;width:1px;height:3px;background:#666"></div>
<div class="a" style="left:769px;top:731px;width:1px;height:5px;background:#666"></div>
<div class="a" style="left:778px;top:731px;width:1px;height:3px;background:#666"></div>
<div class="a" style="left:788px;top:731px;width:1px;height:3px;background:#666"></div>
<div class="a" style="left:797px;top:731px;width:1px;height:3px;background:#666"></div>
<div class="a" style="left:806px;top:731px;width:1px;height:5px;background:#666"></div>
<div class="a" style="left:816px;top:731px;width:1px;height:3px;background:#666"></div>
<div class="a" style="left:825px;top:731px;width:1px;height:3px;background:#666"></div>
<div class="a" style="left:835px;top:731px;width:1px;height:3px;background:#666"></div>
<div class="a" style="left:844px;top:731px;width:1px;height:5px;background:#666"></div>
<div class="t" style="left:656.4px;transform:translateX(-50%);top:735.9px;font-size:12.5px;font-weight:400;color:#6e6e6e;letter-spacing:-0.3px">0</div>
<div class="t" style="left:694.0px;transform:translateX(-50%);top:735.9px;font-size:12.5px;font-weight:400;color:#6e6e6e;letter-spacing:-0.3px">0.2</div>
<div class="t" style="left:731.6px;transform:translateX(-50%);top:735.9px;font-size:12.5px;font-weight:400;color:#6e6e6e;letter-spacing:-0.3px">0.4</div>
<div class="t" style="left:769.1999999999999px;transform:translateX(-50%);top:735.9px;font-size:12.5px;font-weight:400;color:#6e6e6e;letter-spacing:-0.3px">0.6</div>
<div class="t" style="left:806.8px;transform:translateX(-50%);top:735.9px;font-size:12.5px;font-weight:400;color:#6e6e6e;letter-spacing:-0.3px">0.8</div>
<div class="t" style="left:844.4px;transform:translateX(-50%);top:735.9px;font-size:12.5px;font-weight:400;color:#6e6e6e;letter-spacing:-0.3px">1</div>
<div class="a" style="left:860px;top:709px;width:46px;height:14px;background:#cbcbcb"></div>
<div class="t" style="left:862px;top:710.3px;font-size:11.5px;font-weight:700;color:#7a7a7a;letter-spacing:-0.15px">Position</div></body></html>
